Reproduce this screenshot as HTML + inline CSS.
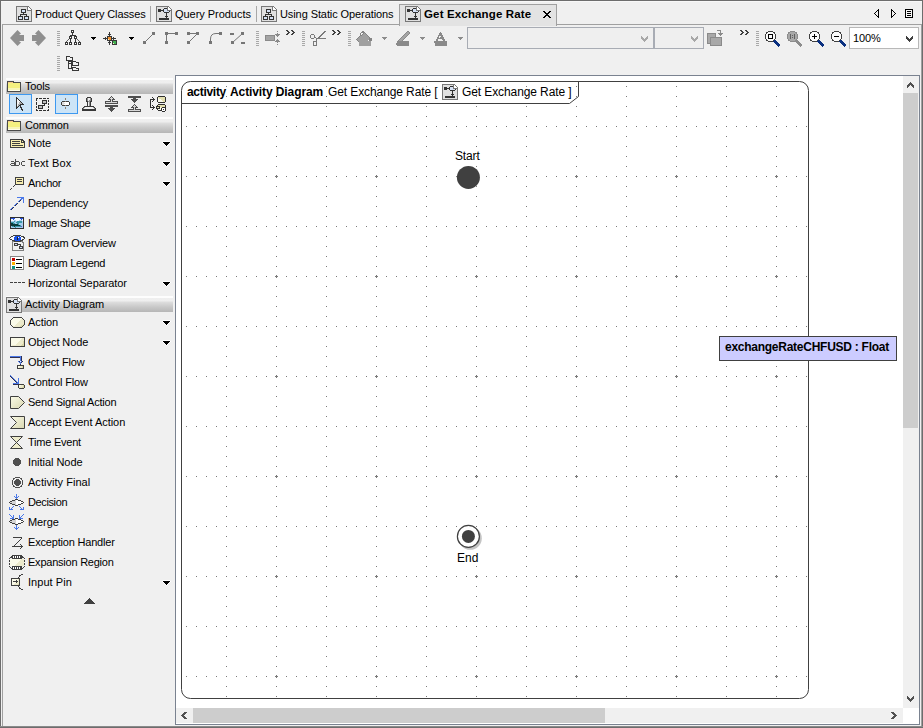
<!DOCTYPE html>
<html><head><meta charset="utf-8">
<style>
*{box-sizing:border-box}
html,body{margin:0;padding:0}
body{width:923px;height:728px;overflow:hidden;position:relative;background:#f0f0f0;font-family:"Liberation Sans",sans-serif;font-size:11px;color:#000}
.a{position:absolute}
.t{position:absolute;white-space:nowrap;line-height:13px}
svg{position:absolute;overflow:visible}
</style></head><body>
<!-- window borders -->
<div class="a" style="left:0;top:0;width:923px;height:1px;background:#6d6d6d"></div>
<div class="a" style="left:0;top:0;width:1px;height:728px;background:#6d6d6d"></div>
<div class="a" style="left:922px;top:0;width:1px;height:728px;background:#6d6d6d"></div>
<div class="a" style="left:0;top:726px;width:923px;height:1px;background:#8a8a8a"></div><div class="a" style="left:0;top:727px;width:923px;height:1px;background:#6d6d6d"></div>
<div class="a" style="left:1px;top:1px;width:921px;height:1px;background:#f8f8f8"></div>
<!-- content pane border -->
<div class="a" style="left:2px;top:24px;width:920px;height:1px;background:#a0a0a0"></div>
<div class="a" style="left:2px;top:24px;width:1px;height:702px;background:#a0a0a0"></div>
<div class="a" style="left:921px;top:24px;width:1px;height:702px;background:#a0a0a0"></div>
<!-- TABS -->
<svg width="16" height="16" style="left:16px;top:6px" shape-rendering="crispEdges"><rect x="0" y="0" width="13" height="1" fill="#787878"/><rect x="0" y="1" width="1" height="1" fill="#787878"/><rect x="1" y="1" width="10" height="1" fill="#e0e0e0"/><rect x="11" y="1" width="1" height="1" fill="#787878"/><rect x="12" y="1" width="1" height="1" fill="#ffffff"/><rect x="13" y="1" width="1" height="1" fill="#787878"/><rect x="0" y="2" width="1" height="1" fill="#787878"/><rect x="1" y="2" width="10" height="1" fill="#e0e0e0"/><rect x="11" y="2" width="1" height="1" fill="#787878"/><rect x="12" y="2" width="2" height="1" fill="#ffffff"/><rect x="14" y="2" width="1" height="1" fill="#787878"/><rect x="0" y="3" width="1" height="1" fill="#787878"/><rect x="1" y="3" width="4" height="1" fill="#e0e0e0"/><rect x="5" y="3" width="5" height="1" fill="#333333"/><rect x="10" y="3" width="1" height="1" fill="#e0e0e0"/><rect x="11" y="3" width="1" height="1" fill="#787878"/><rect x="12" y="3" width="3" height="1" fill="#ffffff"/><rect x="15" y="3" width="1" height="1" fill="#787878"/><rect x="0" y="4" width="1" height="1" fill="#787878"/><rect x="1" y="4" width="4" height="1" fill="#e0e0e0"/><rect x="5" y="4" width="1" height="1" fill="#333333"/><rect x="6" y="4" width="3" height="1" fill="#d4e0f4"/><rect x="9" y="4" width="1" height="1" fill="#333333"/><rect x="10" y="4" width="1" height="1" fill="#e0e0e0"/><rect x="11" y="4" width="5" height="1" fill="#787878"/><rect x="0" y="5" width="1" height="1" fill="#787878"/><rect x="1" y="5" width="4" height="1" fill="#e0e0e0"/><rect x="5" y="5" width="1" height="1" fill="#333333"/><rect x="6" y="5" width="3" height="1" fill="#d4e0f4"/><rect x="9" y="5" width="1" height="1" fill="#333333"/><rect x="10" y="5" width="5" height="1" fill="#e0e0e0"/><rect x="15" y="5" width="1" height="1" fill="#787878"/><rect x="0" y="6" width="1" height="1" fill="#787878"/><rect x="1" y="6" width="4" height="1" fill="#e0e0e0"/><rect x="5" y="6" width="5" height="1" fill="#333333"/><rect x="10" y="6" width="5" height="1" fill="#e0e0e0"/><rect x="15" y="6" width="1" height="1" fill="#787878"/><rect x="0" y="7" width="1" height="1" fill="#787878"/><rect x="1" y="7" width="6" height="1" fill="#e0e0e0"/><rect x="7" y="7" width="1" height="1" fill="#333333"/><rect x="8" y="7" width="7" height="1" fill="#e0e0e0"/><rect x="15" y="7" width="1" height="1" fill="#787878"/><rect x="0" y="8" width="1" height="1" fill="#787878"/><rect x="1" y="8" width="3" height="1" fill="#e0e0e0"/><rect x="4" y="8" width="7" height="1" fill="#333333"/><rect x="11" y="8" width="4" height="1" fill="#e0e0e0"/><rect x="15" y="8" width="1" height="1" fill="#787878"/><rect x="0" y="9" width="1" height="1" fill="#787878"/><rect x="1" y="9" width="3" height="1" fill="#e0e0e0"/><rect x="4" y="9" width="1" height="1" fill="#333333"/><rect x="5" y="9" width="5" height="1" fill="#e0e0e0"/><rect x="10" y="9" width="1" height="1" fill="#333333"/><rect x="11" y="9" width="4" height="1" fill="#e0e0e0"/><rect x="15" y="9" width="1" height="1" fill="#787878"/><rect x="0" y="10" width="1" height="1" fill="#787878"/><rect x="1" y="10" width="1" height="1" fill="#e0e0e0"/><rect x="2" y="10" width="5" height="1" fill="#333333"/><rect x="7" y="10" width="1" height="1" fill="#e0e0e0"/><rect x="8" y="10" width="5" height="1" fill="#333333"/><rect x="13" y="10" width="2" height="1" fill="#e0e0e0"/><rect x="15" y="10" width="1" height="1" fill="#787878"/><rect x="0" y="11" width="1" height="1" fill="#787878"/><rect x="1" y="11" width="1" height="1" fill="#e0e0e0"/><rect x="2" y="11" width="1" height="1" fill="#333333"/><rect x="3" y="11" width="3" height="1" fill="#d4e0f4"/><rect x="6" y="11" width="1" height="1" fill="#333333"/><rect x="7" y="11" width="1" height="1" fill="#e0e0e0"/><rect x="8" y="11" width="1" height="1" fill="#333333"/><rect x="9" y="11" width="3" height="1" fill="#d4e0f4"/><rect x="12" y="11" width="1" height="1" fill="#333333"/><rect x="13" y="11" width="2" height="1" fill="#e0e0e0"/><rect x="15" y="11" width="1" height="1" fill="#787878"/><rect x="0" y="12" width="1" height="1" fill="#787878"/><rect x="1" y="12" width="1" height="1" fill="#e0e0e0"/><rect x="2" y="12" width="1" height="1" fill="#333333"/><rect x="3" y="12" width="3" height="1" fill="#d4e0f4"/><rect x="6" y="12" width="1" height="1" fill="#333333"/><rect x="7" y="12" width="1" height="1" fill="#e0e0e0"/><rect x="8" y="12" width="1" height="1" fill="#333333"/><rect x="9" y="12" width="3" height="1" fill="#d4e0f4"/><rect x="12" y="12" width="1" height="1" fill="#333333"/><rect x="13" y="12" width="2" height="1" fill="#e0e0e0"/><rect x="15" y="12" width="1" height="1" fill="#787878"/><rect x="0" y="13" width="1" height="1" fill="#787878"/><rect x="1" y="13" width="1" height="1" fill="#e0e0e0"/><rect x="2" y="13" width="5" height="1" fill="#333333"/><rect x="7" y="13" width="1" height="1" fill="#e0e0e0"/><rect x="8" y="13" width="5" height="1" fill="#333333"/><rect x="13" y="13" width="2" height="1" fill="#e0e0e0"/><rect x="15" y="13" width="1" height="1" fill="#787878"/><rect x="0" y="14" width="1" height="1" fill="#787878"/><rect x="1" y="14" width="14" height="1" fill="#e0e0e0"/><rect x="15" y="14" width="1" height="1" fill="#787878"/><rect x="0" y="15" width="16" height="1" fill="#787878"/></svg>
<div class="t" style="left:35px;top:8px;letter-spacing:-0.12px">Product Query Classes</div>
<div class="a" style="left:150px;top:6px;width:1px;height:16px;background:#a8a8a8"></div>
<svg width="16" height="16" style="left:156px;top:6px" shape-rendering="crispEdges"><rect x="0" y="0" width="13" height="1" fill="#787878"/><rect x="0" y="1" width="1" height="1" fill="#787878"/><rect x="1" y="1" width="10" height="1" fill="#e0e0e0"/><rect x="11" y="1" width="1" height="1" fill="#787878"/><rect x="12" y="1" width="1" height="1" fill="#ffffff"/><rect x="13" y="1" width="1" height="1" fill="#787878"/><rect x="0" y="2" width="1" height="1" fill="#787878"/><rect x="1" y="2" width="7" height="1" fill="#e0e0e0"/><rect x="8" y="2" width="3" height="1" fill="#333333"/><rect x="11" y="2" width="1" height="1" fill="#787878"/><rect x="12" y="2" width="2" height="1" fill="#ffffff"/><rect x="14" y="2" width="1" height="1" fill="#787878"/><rect x="0" y="3" width="1" height="1" fill="#787878"/><rect x="1" y="3" width="1" height="1" fill="#e0e0e0"/><rect x="2" y="3" width="3" height="1" fill="#333333"/><rect x="5" y="3" width="2" height="1" fill="#e0e0e0"/><rect x="7" y="3" width="1" height="1" fill="#333333"/><rect x="8" y="3" width="3" height="1" fill="#d4e0f4"/><rect x="11" y="3" width="1" height="1" fill="#787878"/><rect x="12" y="3" width="3" height="1" fill="#ffffff"/><rect x="15" y="3" width="1" height="1" fill="#787878"/><rect x="0" y="4" width="1" height="1" fill="#787878"/><rect x="1" y="4" width="1" height="1" fill="#e0e0e0"/><rect x="2" y="4" width="6" height="1" fill="#333333"/><rect x="8" y="4" width="3" height="1" fill="#d4e0f4"/><rect x="11" y="4" width="5" height="1" fill="#787878"/><rect x="0" y="5" width="1" height="1" fill="#787878"/><rect x="1" y="5" width="1" height="1" fill="#e0e0e0"/><rect x="2" y="5" width="3" height="1" fill="#333333"/><rect x="5" y="5" width="2" height="1" fill="#e0e0e0"/><rect x="7" y="5" width="1" height="1" fill="#333333"/><rect x="8" y="5" width="5" height="1" fill="#d4e0f4"/><rect x="13" y="5" width="1" height="1" fill="#333333"/><rect x="14" y="5" width="1" height="1" fill="#e0e0e0"/><rect x="15" y="5" width="1" height="1" fill="#787878"/><rect x="0" y="6" width="1" height="1" fill="#787878"/><rect x="1" y="6" width="7" height="1" fill="#e0e0e0"/><rect x="8" y="6" width="5" height="1" fill="#333333"/><rect x="13" y="6" width="2" height="1" fill="#e0e0e0"/><rect x="15" y="6" width="1" height="1" fill="#787878"/><rect x="0" y="7" width="1" height="1" fill="#787878"/><rect x="1" y="7" width="9" height="1" fill="#e0e0e0"/><rect x="10" y="7" width="1" height="1" fill="#333333"/><rect x="11" y="7" width="4" height="1" fill="#e0e0e0"/><rect x="15" y="7" width="1" height="1" fill="#787878"/><rect x="0" y="8" width="1" height="1" fill="#787878"/><rect x="1" y="8" width="9" height="1" fill="#e0e0e0"/><rect x="10" y="8" width="1" height="1" fill="#333333"/><rect x="11" y="8" width="4" height="1" fill="#e0e0e0"/><rect x="15" y="8" width="1" height="1" fill="#787878"/><rect x="0" y="9" width="1" height="1" fill="#787878"/><rect x="1" y="9" width="9" height="1" fill="#e0e0e0"/><rect x="10" y="9" width="1" height="1" fill="#333333"/><rect x="11" y="9" width="4" height="1" fill="#e0e0e0"/><rect x="15" y="9" width="1" height="1" fill="#787878"/><rect x="0" y="10" width="1" height="1" fill="#787878"/><rect x="1" y="10" width="8" height="1" fill="#e0e0e0"/><rect x="9" y="10" width="3" height="1" fill="#333333"/><rect x="12" y="10" width="3" height="1" fill="#e0e0e0"/><rect x="15" y="10" width="1" height="1" fill="#787878"/><rect x="0" y="11" width="1" height="1" fill="#787878"/><rect x="1" y="11" width="9" height="1" fill="#e0e0e0"/><rect x="10" y="11" width="1" height="1" fill="#333333"/><rect x="11" y="11" width="4" height="1" fill="#e0e0e0"/><rect x="15" y="11" width="1" height="1" fill="#787878"/><rect x="0" y="12" width="1" height="1" fill="#787878"/><rect x="1" y="12" width="2" height="1" fill="#e0e0e0"/><rect x="3" y="12" width="10" height="1" fill="#333333"/><rect x="13" y="12" width="2" height="1" fill="#e0e0e0"/><rect x="15" y="12" width="1" height="1" fill="#787878"/><rect x="0" y="13" width="1" height="1" fill="#787878"/><rect x="1" y="13" width="2" height="1" fill="#e0e0e0"/><rect x="3" y="13" width="10" height="1" fill="#333333"/><rect x="13" y="13" width="2" height="1" fill="#e0e0e0"/><rect x="15" y="13" width="1" height="1" fill="#787878"/><rect x="0" y="14" width="1" height="1" fill="#787878"/><rect x="1" y="14" width="14" height="1" fill="#e0e0e0"/><rect x="15" y="14" width="1" height="1" fill="#787878"/><rect x="0" y="15" width="16" height="1" fill="#787878"/></svg>
<div class="t" style="left:175px;top:8px;letter-spacing:-0.04px">Query Products</div>
<div class="a" style="left:256px;top:6px;width:1px;height:16px;background:#a8a8a8"></div>
<svg width="16" height="16" style="left:261px;top:6px" shape-rendering="crispEdges"><rect x="0" y="0" width="13" height="1" fill="#787878"/><rect x="0" y="1" width="1" height="1" fill="#787878"/><rect x="1" y="1" width="10" height="1" fill="#e0e0e0"/><rect x="11" y="1" width="1" height="1" fill="#787878"/><rect x="12" y="1" width="1" height="1" fill="#ffffff"/><rect x="13" y="1" width="1" height="1" fill="#787878"/><rect x="0" y="2" width="1" height="1" fill="#787878"/><rect x="1" y="2" width="10" height="1" fill="#e0e0e0"/><rect x="11" y="2" width="1" height="1" fill="#787878"/><rect x="12" y="2" width="2" height="1" fill="#ffffff"/><rect x="14" y="2" width="1" height="1" fill="#787878"/><rect x="0" y="3" width="1" height="1" fill="#787878"/><rect x="1" y="3" width="4" height="1" fill="#e0e0e0"/><rect x="5" y="3" width="5" height="1" fill="#333333"/><rect x="10" y="3" width="1" height="1" fill="#e0e0e0"/><rect x="11" y="3" width="1" height="1" fill="#787878"/><rect x="12" y="3" width="3" height="1" fill="#ffffff"/><rect x="15" y="3" width="1" height="1" fill="#787878"/><rect x="0" y="4" width="1" height="1" fill="#787878"/><rect x="1" y="4" width="4" height="1" fill="#e0e0e0"/><rect x="5" y="4" width="1" height="1" fill="#333333"/><rect x="6" y="4" width="3" height="1" fill="#d4e0f4"/><rect x="9" y="4" width="1" height="1" fill="#333333"/><rect x="10" y="4" width="1" height="1" fill="#e0e0e0"/><rect x="11" y="4" width="5" height="1" fill="#787878"/><rect x="0" y="5" width="1" height="1" fill="#787878"/><rect x="1" y="5" width="4" height="1" fill="#e0e0e0"/><rect x="5" y="5" width="1" height="1" fill="#333333"/><rect x="6" y="5" width="3" height="1" fill="#d4e0f4"/><rect x="9" y="5" width="1" height="1" fill="#333333"/><rect x="10" y="5" width="5" height="1" fill="#e0e0e0"/><rect x="15" y="5" width="1" height="1" fill="#787878"/><rect x="0" y="6" width="1" height="1" fill="#787878"/><rect x="1" y="6" width="4" height="1" fill="#e0e0e0"/><rect x="5" y="6" width="5" height="1" fill="#333333"/><rect x="10" y="6" width="5" height="1" fill="#e0e0e0"/><rect x="15" y="6" width="1" height="1" fill="#787878"/><rect x="0" y="7" width="1" height="1" fill="#787878"/><rect x="1" y="7" width="6" height="1" fill="#e0e0e0"/><rect x="7" y="7" width="1" height="1" fill="#333333"/><rect x="8" y="7" width="7" height="1" fill="#e0e0e0"/><rect x="15" y="7" width="1" height="1" fill="#787878"/><rect x="0" y="8" width="1" height="1" fill="#787878"/><rect x="1" y="8" width="3" height="1" fill="#e0e0e0"/><rect x="4" y="8" width="7" height="1" fill="#333333"/><rect x="11" y="8" width="4" height="1" fill="#e0e0e0"/><rect x="15" y="8" width="1" height="1" fill="#787878"/><rect x="0" y="9" width="1" height="1" fill="#787878"/><rect x="1" y="9" width="3" height="1" fill="#e0e0e0"/><rect x="4" y="9" width="1" height="1" fill="#333333"/><rect x="5" y="9" width="5" height="1" fill="#e0e0e0"/><rect x="10" y="9" width="1" height="1" fill="#333333"/><rect x="11" y="9" width="4" height="1" fill="#e0e0e0"/><rect x="15" y="9" width="1" height="1" fill="#787878"/><rect x="0" y="10" width="1" height="1" fill="#787878"/><rect x="1" y="10" width="1" height="1" fill="#e0e0e0"/><rect x="2" y="10" width="5" height="1" fill="#333333"/><rect x="7" y="10" width="1" height="1" fill="#e0e0e0"/><rect x="8" y="10" width="5" height="1" fill="#333333"/><rect x="13" y="10" width="2" height="1" fill="#e0e0e0"/><rect x="15" y="10" width="1" height="1" fill="#787878"/><rect x="0" y="11" width="1" height="1" fill="#787878"/><rect x="1" y="11" width="1" height="1" fill="#e0e0e0"/><rect x="2" y="11" width="1" height="1" fill="#333333"/><rect x="3" y="11" width="3" height="1" fill="#d4e0f4"/><rect x="6" y="11" width="1" height="1" fill="#333333"/><rect x="7" y="11" width="1" height="1" fill="#e0e0e0"/><rect x="8" y="11" width="1" height="1" fill="#333333"/><rect x="9" y="11" width="3" height="1" fill="#d4e0f4"/><rect x="12" y="11" width="1" height="1" fill="#333333"/><rect x="13" y="11" width="2" height="1" fill="#e0e0e0"/><rect x="15" y="11" width="1" height="1" fill="#787878"/><rect x="0" y="12" width="1" height="1" fill="#787878"/><rect x="1" y="12" width="1" height="1" fill="#e0e0e0"/><rect x="2" y="12" width="1" height="1" fill="#333333"/><rect x="3" y="12" width="3" height="1" fill="#d4e0f4"/><rect x="6" y="12" width="1" height="1" fill="#333333"/><rect x="7" y="12" width="1" height="1" fill="#e0e0e0"/><rect x="8" y="12" width="1" height="1" fill="#333333"/><rect x="9" y="12" width="3" height="1" fill="#d4e0f4"/><rect x="12" y="12" width="1" height="1" fill="#333333"/><rect x="13" y="12" width="2" height="1" fill="#e0e0e0"/><rect x="15" y="12" width="1" height="1" fill="#787878"/><rect x="0" y="13" width="1" height="1" fill="#787878"/><rect x="1" y="13" width="1" height="1" fill="#e0e0e0"/><rect x="2" y="13" width="5" height="1" fill="#333333"/><rect x="7" y="13" width="1" height="1" fill="#e0e0e0"/><rect x="8" y="13" width="5" height="1" fill="#333333"/><rect x="13" y="13" width="2" height="1" fill="#e0e0e0"/><rect x="15" y="13" width="1" height="1" fill="#787878"/><rect x="0" y="14" width="1" height="1" fill="#787878"/><rect x="1" y="14" width="14" height="1" fill="#e0e0e0"/><rect x="15" y="14" width="1" height="1" fill="#787878"/><rect x="0" y="15" width="16" height="1" fill="#787878"/></svg>
<div class="t" style="left:280px;top:8px;letter-spacing:-0.09px">Using Static Operations</div>
<!-- active tab -->
<div class="a" style="left:399px;top:4px;width:158px;height:22px;background:#e3e3e3;border:1px solid #a0a0a0;border-bottom:none"></div>
<svg width="16" height="16" style="left:405px;top:6px" shape-rendering="crispEdges"><rect x="0" y="0" width="13" height="1" fill="#787878"/><rect x="0" y="1" width="1" height="1" fill="#787878"/><rect x="1" y="1" width="10" height="1" fill="#e0e0e0"/><rect x="11" y="1" width="1" height="1" fill="#787878"/><rect x="12" y="1" width="1" height="1" fill="#ffffff"/><rect x="13" y="1" width="1" height="1" fill="#787878"/><rect x="0" y="2" width="1" height="1" fill="#787878"/><rect x="1" y="2" width="7" height="1" fill="#e0e0e0"/><rect x="8" y="2" width="3" height="1" fill="#333333"/><rect x="11" y="2" width="1" height="1" fill="#787878"/><rect x="12" y="2" width="2" height="1" fill="#ffffff"/><rect x="14" y="2" width="1" height="1" fill="#787878"/><rect x="0" y="3" width="1" height="1" fill="#787878"/><rect x="1" y="3" width="1" height="1" fill="#e0e0e0"/><rect x="2" y="3" width="3" height="1" fill="#333333"/><rect x="5" y="3" width="2" height="1" fill="#e0e0e0"/><rect x="7" y="3" width="1" height="1" fill="#333333"/><rect x="8" y="3" width="3" height="1" fill="#d4e0f4"/><rect x="11" y="3" width="1" height="1" fill="#787878"/><rect x="12" y="3" width="3" height="1" fill="#ffffff"/><rect x="15" y="3" width="1" height="1" fill="#787878"/><rect x="0" y="4" width="1" height="1" fill="#787878"/><rect x="1" y="4" width="1" height="1" fill="#e0e0e0"/><rect x="2" y="4" width="6" height="1" fill="#333333"/><rect x="8" y="4" width="3" height="1" fill="#d4e0f4"/><rect x="11" y="4" width="5" height="1" fill="#787878"/><rect x="0" y="5" width="1" height="1" fill="#787878"/><rect x="1" y="5" width="1" height="1" fill="#e0e0e0"/><rect x="2" y="5" width="3" height="1" fill="#333333"/><rect x="5" y="5" width="2" height="1" fill="#e0e0e0"/><rect x="7" y="5" width="1" height="1" fill="#333333"/><rect x="8" y="5" width="5" height="1" fill="#d4e0f4"/><rect x="13" y="5" width="1" height="1" fill="#333333"/><rect x="14" y="5" width="1" height="1" fill="#e0e0e0"/><rect x="15" y="5" width="1" height="1" fill="#787878"/><rect x="0" y="6" width="1" height="1" fill="#787878"/><rect x="1" y="6" width="7" height="1" fill="#e0e0e0"/><rect x="8" y="6" width="5" height="1" fill="#333333"/><rect x="13" y="6" width="2" height="1" fill="#e0e0e0"/><rect x="15" y="6" width="1" height="1" fill="#787878"/><rect x="0" y="7" width="1" height="1" fill="#787878"/><rect x="1" y="7" width="9" height="1" fill="#e0e0e0"/><rect x="10" y="7" width="1" height="1" fill="#333333"/><rect x="11" y="7" width="4" height="1" fill="#e0e0e0"/><rect x="15" y="7" width="1" height="1" fill="#787878"/><rect x="0" y="8" width="1" height="1" fill="#787878"/><rect x="1" y="8" width="9" height="1" fill="#e0e0e0"/><rect x="10" y="8" width="1" height="1" fill="#333333"/><rect x="11" y="8" width="4" height="1" fill="#e0e0e0"/><rect x="15" y="8" width="1" height="1" fill="#787878"/><rect x="0" y="9" width="1" height="1" fill="#787878"/><rect x="1" y="9" width="9" height="1" fill="#e0e0e0"/><rect x="10" y="9" width="1" height="1" fill="#333333"/><rect x="11" y="9" width="4" height="1" fill="#e0e0e0"/><rect x="15" y="9" width="1" height="1" fill="#787878"/><rect x="0" y="10" width="1" height="1" fill="#787878"/><rect x="1" y="10" width="8" height="1" fill="#e0e0e0"/><rect x="9" y="10" width="3" height="1" fill="#333333"/><rect x="12" y="10" width="3" height="1" fill="#e0e0e0"/><rect x="15" y="10" width="1" height="1" fill="#787878"/><rect x="0" y="11" width="1" height="1" fill="#787878"/><rect x="1" y="11" width="9" height="1" fill="#e0e0e0"/><rect x="10" y="11" width="1" height="1" fill="#333333"/><rect x="11" y="11" width="4" height="1" fill="#e0e0e0"/><rect x="15" y="11" width="1" height="1" fill="#787878"/><rect x="0" y="12" width="1" height="1" fill="#787878"/><rect x="1" y="12" width="2" height="1" fill="#e0e0e0"/><rect x="3" y="12" width="10" height="1" fill="#333333"/><rect x="13" y="12" width="2" height="1" fill="#e0e0e0"/><rect x="15" y="12" width="1" height="1" fill="#787878"/><rect x="0" y="13" width="1" height="1" fill="#787878"/><rect x="1" y="13" width="2" height="1" fill="#e0e0e0"/><rect x="3" y="13" width="10" height="1" fill="#333333"/><rect x="13" y="13" width="2" height="1" fill="#e0e0e0"/><rect x="15" y="13" width="1" height="1" fill="#787878"/><rect x="0" y="14" width="1" height="1" fill="#787878"/><rect x="1" y="14" width="14" height="1" fill="#e0e0e0"/><rect x="15" y="14" width="1" height="1" fill="#787878"/><rect x="0" y="15" width="16" height="1" fill="#787878"/></svg>
<div class="t" style="left:424px;top:8px;font-weight:bold;font-size:11.5px;letter-spacing:0.15px">Get Exchange Rate</div>
<svg width="8" height="7" style="left:543px;top:11px" shape-rendering="crispEdges"><rect x="0" y="0" width="2" height="1" fill="#000"/><rect x="6" y="0" width="2" height="1" fill="#000"/><rect x="1" y="1" width="2" height="1" fill="#000"/><rect x="5" y="1" width="2" height="1" fill="#000"/><rect x="2" y="2" width="4" height="1" fill="#000"/><rect x="3" y="3" width="2" height="1" fill="#000"/><rect x="2" y="4" width="4" height="1" fill="#000"/><rect x="1" y="5" width="2" height="1" fill="#000"/><rect x="5" y="5" width="2" height="1" fill="#000"/><rect x="0" y="6" width="2" height="1" fill="#000"/><rect x="6" y="6" width="2" height="1" fill="#000"/></svg>
<!-- tab nav -->
<svg width="5" height="9" style="left:874px;top:9px" shape-rendering="crispEdges"><rect x="4" y="0" width="1" height="1" fill="#000"/><rect x="3" y="1" width="2" height="1" fill="#000"/><rect x="2" y="2" width="1" height="1" fill="#000"/><rect x="4" y="2" width="1" height="1" fill="#000"/><rect x="1" y="3" width="1" height="1" fill="#000"/><rect x="4" y="3" width="1" height="1" fill="#000"/><rect x="0" y="4" width="1" height="1" fill="#000"/><rect x="4" y="4" width="1" height="1" fill="#000"/><rect x="1" y="5" width="1" height="1" fill="#000"/><rect x="4" y="5" width="1" height="1" fill="#000"/><rect x="2" y="6" width="1" height="1" fill="#000"/><rect x="4" y="6" width="1" height="1" fill="#000"/><rect x="3" y="7" width="2" height="1" fill="#000"/><rect x="4" y="8" width="1" height="1" fill="#000"/></svg>
<svg width="5" height="9" style="left:891px;top:9px" shape-rendering="crispEdges"><rect x="0" y="0" width="1" height="1" fill="#000"/><rect x="0" y="1" width="2" height="1" fill="#000"/><rect x="0" y="2" width="1" height="1" fill="#000"/><rect x="2" y="2" width="1" height="1" fill="#000"/><rect x="0" y="3" width="1" height="1" fill="#000"/><rect x="3" y="3" width="1" height="1" fill="#000"/><rect x="0" y="4" width="1" height="1" fill="#000"/><rect x="4" y="4" width="1" height="1" fill="#000"/><rect x="0" y="5" width="1" height="1" fill="#000"/><rect x="3" y="5" width="1" height="1" fill="#000"/><rect x="0" y="6" width="1" height="1" fill="#000"/><rect x="2" y="6" width="1" height="1" fill="#000"/><rect x="0" y="7" width="2" height="1" fill="#000"/><rect x="0" y="8" width="1" height="1" fill="#000"/></svg>
<svg width="8" height="9" style="left:905px;top:9px" shape-rendering="crispEdges"><rect x="0" y="0" width="8" height="1" fill="#000"/><rect x="0" y="1" width="1" height="1" fill="#000"/><rect x="1" y="1" width="6" height="1" fill="#f8f8f8"/><rect x="7" y="1" width="1" height="1" fill="#000"/><rect x="0" y="2" width="1" height="1" fill="#000"/><rect x="1" y="2" width="1" height="1" fill="#f8f8f8"/><rect x="2" y="2" width="4" height="1" fill="#000"/><rect x="6" y="2" width="1" height="1" fill="#f8f8f8"/><rect x="7" y="2" width="1" height="1" fill="#000"/><rect x="0" y="3" width="1" height="1" fill="#000"/><rect x="1" y="3" width="6" height="1" fill="#f8f8f8"/><rect x="7" y="3" width="1" height="1" fill="#000"/><rect x="0" y="4" width="1" height="1" fill="#000"/><rect x="1" y="4" width="1" height="1" fill="#f8f8f8"/><rect x="2" y="4" width="4" height="1" fill="#000"/><rect x="6" y="4" width="1" height="1" fill="#f8f8f8"/><rect x="7" y="4" width="1" height="1" fill="#000"/><rect x="0" y="5" width="1" height="1" fill="#000"/><rect x="1" y="5" width="6" height="1" fill="#f8f8f8"/><rect x="7" y="5" width="1" height="1" fill="#000"/><rect x="0" y="6" width="1" height="1" fill="#000"/><rect x="1" y="6" width="1" height="1" fill="#f8f8f8"/><rect x="2" y="6" width="4" height="1" fill="#000"/><rect x="6" y="6" width="1" height="1" fill="#f8f8f8"/><rect x="7" y="6" width="1" height="1" fill="#000"/><rect x="0" y="7" width="1" height="1" fill="#000"/><rect x="1" y="7" width="6" height="1" fill="#f8f8f8"/><rect x="7" y="7" width="1" height="1" fill="#000"/><rect x="0" y="8" width="8" height="1" fill="#000"/></svg>

<!-- TOOLBAR -->
<svg width="16" height="17" style="left:9px;top:30px"><path d="M1 8L8.5 0L12 3.5L10 5.1H15V10.9H10L12 12.5L8.5 16Z" fill="#8f8f8f"/></svg>
<svg width="16" height="17" style="left:32px;top:30px"><path d="M14 8L6.5 0L3 3.5L5 5.1H0V10.9H5L3 12.5L6.5 16Z" fill="#8f8f8f"/></svg>
<svg width="4" height="16" style="left:57px;top:31px" shape-rendering="crispEdges"><path d="M0 0.5H3M0 2.5H3M0 4.5H3M0 6.5H3M0 8.5H3M0 10.5H3M0 12.5H3M0 14.5H3" stroke="#a8a8a8"/></svg>
<svg width="16" height="15" style="left:65px;top:30px" shape-rendering="crispEdges"><rect x="6" y="0" width="3" height="1" fill="#383838"/><rect x="6" y="1" width="1" height="1" fill="#383838"/><rect x="7" y="1" width="1" height="1" fill="#ffffff"/><rect x="8" y="1" width="1" height="1" fill="#383838"/><rect x="6" y="2" width="3" height="1" fill="#383838"/><rect x="7" y="3" width="1" height="1" fill="#383838"/><rect x="7" y="4" width="1" height="1" fill="#383838"/><rect x="5" y="5" width="6" height="1" fill="#383838"/><rect x="4" y="6" width="3" height="1" fill="#383838"/><rect x="9" y="6" width="3" height="1" fill="#383838"/><rect x="4" y="7" width="1" height="1" fill="#383838"/><rect x="5" y="7" width="1" height="1" fill="#ffffff"/><rect x="6" y="7" width="1" height="1" fill="#383838"/><rect x="9" y="7" width="1" height="1" fill="#383838"/><rect x="10" y="7" width="1" height="1" fill="#ffffff"/><rect x="11" y="7" width="1" height="1" fill="#383838"/><rect x="4" y="8" width="3" height="1" fill="#383838"/><rect x="9" y="8" width="3" height="1" fill="#383838"/><rect x="3" y="9" width="1" height="1" fill="#606060"/><rect x="5" y="9" width="1" height="1" fill="#383838"/><rect x="10" y="9" width="1" height="1" fill="#383838"/><rect x="12" y="9" width="1" height="1" fill="#606060"/><rect x="2" y="10" width="1" height="1" fill="#606060"/><rect x="5" y="10" width="1" height="1" fill="#383838"/><rect x="10" y="10" width="1" height="1" fill="#383838"/><rect x="13" y="10" width="1" height="1" fill="#606060"/><rect x="1" y="11" width="1" height="1" fill="#606060"/><rect x="5" y="11" width="1" height="1" fill="#383838"/><rect x="10" y="11" width="1" height="1" fill="#383838"/><rect x="14" y="11" width="1" height="1" fill="#606060"/><rect x="0" y="12" width="3" height="1" fill="#383838"/><rect x="4" y="12" width="3" height="1" fill="#383838"/><rect x="9" y="12" width="3" height="1" fill="#383838"/><rect x="13" y="12" width="3" height="1" fill="#383838"/><rect x="0" y="13" width="1" height="1" fill="#383838"/><rect x="1" y="13" width="1" height="1" fill="#ffffff"/><rect x="2" y="13" width="1" height="1" fill="#383838"/><rect x="4" y="13" width="1" height="1" fill="#383838"/><rect x="5" y="13" width="1" height="1" fill="#ffffff"/><rect x="6" y="13" width="1" height="1" fill="#383838"/><rect x="9" y="13" width="1" height="1" fill="#383838"/><rect x="10" y="13" width="1" height="1" fill="#ffffff"/><rect x="11" y="13" width="1" height="1" fill="#383838"/><rect x="13" y="13" width="1" height="1" fill="#383838"/><rect x="14" y="13" width="1" height="1" fill="#ffffff"/><rect x="15" y="13" width="1" height="1" fill="#383838"/><rect x="0" y="14" width="3" height="1" fill="#383838"/><rect x="4" y="14" width="3" height="1" fill="#383838"/><rect x="9" y="14" width="3" height="1" fill="#383838"/><rect x="13" y="14" width="3" height="1" fill="#383838"/></svg>
<svg width="5" height="3" style="left:91px;top:37px" shape-rendering="crispEdges"><rect x="0" y="0" width="5" height="1" fill="#000"/><rect x="1" y="1" width="3" height="1" fill="#000"/><rect x="2" y="2" width="1" height="1" fill="#000"/></svg>
<svg width="14" height="13" style="left:103px;top:32px" shape-rendering="crispEdges"><rect x="6" y="0" width="1" height="1" fill="#383838"/><rect x="6" y="1" width="1" height="1" fill="#383838"/><rect x="5" y="2" width="3" height="1" fill="#383838"/><rect x="6" y="3" width="1" height="1" fill="#383838"/><rect x="4" y="4" width="5" height="1" fill="#383838"/><rect x="2" y="5" width="1" height="1" fill="#383838"/><rect x="4" y="5" width="1" height="1" fill="#383838"/><rect x="5" y="5" width="3" height="1" fill="#ee9030"/><rect x="8" y="5" width="1" height="1" fill="#383838"/><rect x="10" y="5" width="1" height="1" fill="#383838"/><rect x="0" y="6" width="5" height="1" fill="#383838"/><rect x="5" y="6" width="3" height="1" fill="#ee9030"/><rect x="8" y="6" width="5" height="1" fill="#383838"/><rect x="2" y="7" width="1" height="1" fill="#383838"/><rect x="4" y="7" width="1" height="1" fill="#383838"/><rect x="5" y="7" width="1" height="1" fill="#fff0c0"/><rect x="6" y="7" width="2" height="1" fill="#ee9030"/><rect x="8" y="7" width="1" height="1" fill="#383838"/><rect x="10" y="7" width="1" height="1" fill="#383838"/><rect x="4" y="8" width="10" height="1" fill="#383838"/><rect x="6" y="9" width="1" height="1" fill="#383838"/><rect x="9" y="9" width="1" height="1" fill="#383838"/><rect x="10" y="9" width="3" height="1" fill="#40b050"/><rect x="13" y="9" width="1" height="1" fill="#383838"/><rect x="5" y="10" width="3" height="1" fill="#383838"/><rect x="9" y="10" width="1" height="1" fill="#383838"/><rect x="10" y="10" width="3" height="1" fill="#40b050"/><rect x="13" y="10" width="1" height="1" fill="#383838"/><rect x="6" y="11" width="1" height="1" fill="#383838"/><rect x="9" y="11" width="1" height="1" fill="#383838"/><rect x="10" y="11" width="1" height="1" fill="#fff0c0"/><rect x="11" y="11" width="2" height="1" fill="#40b050"/><rect x="13" y="11" width="1" height="1" fill="#383838"/><rect x="6" y="12" width="1" height="1" fill="#383838"/><rect x="9" y="12" width="5" height="1" fill="#383838"/></svg>
<svg width="5" height="3" style="left:129px;top:37px" shape-rendering="crispEdges"><rect x="0" y="0" width="5" height="1" fill="#000"/><rect x="1" y="1" width="3" height="1" fill="#000"/><rect x="2" y="2" width="1" height="1" fill="#000"/></svg>
<svg width="14" height="14" style="left:142px;top:31px" shape-rendering="crispEdges" fill="#767676"><path d="M2.5 11.5L11.5 2.5" stroke="#767676" shape-rendering="auto"/><rect x="1" y="10" width="3" height="3"/><rect x="10" y="1" width="3" height="3"/></svg>
<svg width="14" height="14" style="left:164px;top:31px" shape-rendering="crispEdges" fill="#767676"><path d="M2.5 2.5H11.5M2.5 2.5V11.5" stroke="#767676"/><rect x="1" y="1" width="3" height="3"/><rect x="11" y="1" width="3" height="3"/><rect x="1" y="10" width="3" height="3"/></svg>
<svg width="14" height="14" style="left:186px;top:31px" shape-rendering="crispEdges" fill="#767676"><path d="M2.5 2.5H11.5" stroke="#767676"/><path d="M11.5 2.5L2.5 11.5" stroke="#767676" shape-rendering="auto"/><rect x="1" y="1" width="3" height="3"/><rect x="10" y="1" width="3" height="3"/><rect x="1" y="10" width="3" height="3"/></svg>
<svg width="14" height="14" style="left:208px;top:31px" fill="#767676"><path d="M2.5 11.5V8Q2.5 2.5 8 2.5H11.5" stroke="#767676" fill="none"/><rect x="1" y="10" width="3" height="3"/><rect x="11" y="1" width="3" height="3"/></svg>
<svg width="16" height="14" style="left:230px;top:31px" shape-rendering="crispEdges" fill="#767676"><path d="M12.5 2.5L2.5 11.5" stroke="#767676" shape-rendering="auto"/><rect x="0" y="2" width="4" height="2"/><rect x="11" y="1" width="3" height="3"/><rect x="1" y="10" width="3" height="3"/><rect x="11" y="11" width="4" height="2"/></svg>
<svg width="4" height="16" style="left:256px;top:31px" shape-rendering="crispEdges"><path d="M0 0.5H3M0 2.5H3M0 4.5H3M0 6.5H3M0 8.5H3M0 10.5H3M0 12.5H3M0 14.5H3" stroke="#a8a8a8"/></svg>
<svg width="16" height="14" style="left:265px;top:31px" shape-rendering="crispEdges"><rect x="12" y="0" width="1" height="1" fill="#8a8a8a"/><rect x="12" y="2" width="1" height="1" fill="#8a8a8a"/><rect x="10" y="3" width="5" height="1" fill="#8a8a8a"/><rect x="0" y="4" width="10" height="1" fill="#8a8a8a"/><rect x="11" y="4" width="3" height="1" fill="#8a8a8a"/><rect x="0" y="5" width="1" height="1" fill="#8a8a8a"/><rect x="1" y="5" width="8" height="1" fill="#a4a4a4"/><rect x="9" y="5" width="1" height="1" fill="#8a8a8a"/><rect x="12" y="5" width="1" height="1" fill="#8a8a8a"/><rect x="0" y="6" width="1" height="1" fill="#8a8a8a"/><rect x="1" y="6" width="8" height="1" fill="#a4a4a4"/><rect x="9" y="6" width="1" height="1" fill="#8a8a8a"/><rect x="0" y="7" width="1" height="1" fill="#8a8a8a"/><rect x="1" y="7" width="8" height="1" fill="#a4a4a4"/><rect x="9" y="7" width="1" height="1" fill="#8a8a8a"/><rect x="0" y="8" width="1" height="1" fill="#8a8a8a"/><rect x="1" y="8" width="8" height="1" fill="#a4a4a4"/><rect x="9" y="8" width="1" height="1" fill="#8a8a8a"/><rect x="12" y="8" width="1" height="1" fill="#8a8a8a"/><rect x="0" y="9" width="10" height="1" fill="#8a8a8a"/><rect x="11" y="9" width="3" height="1" fill="#8a8a8a"/><rect x="10" y="10" width="5" height="1" fill="#8a8a8a"/><rect x="12" y="11" width="1" height="1" fill="#8a8a8a"/><rect x="12" y="13" width="1" height="1" fill="#8a8a8a"/></svg>
<svg width="9" height="5" style="left:286px;top:30px" shape-rendering="crispEdges"><rect x="0" y="0" width="2" height="1" fill="#404040"/><rect x="5" y="0" width="2" height="1" fill="#404040"/><rect x="1" y="1" width="2" height="1" fill="#404040"/><rect x="6" y="1" width="2" height="1" fill="#404040"/><rect x="2" y="2" width="2" height="1" fill="#404040"/><rect x="7" y="2" width="2" height="1" fill="#404040"/><rect x="1" y="3" width="2" height="1" fill="#404040"/><rect x="6" y="3" width="2" height="1" fill="#404040"/><rect x="0" y="4" width="2" height="1" fill="#404040"/><rect x="5" y="4" width="2" height="1" fill="#404040"/></svg>
<svg width="4" height="16" style="left:302px;top:31px" shape-rendering="crispEdges"><path d="M0 0.5H3M0 2.5H3M0 4.5H3M0 6.5H3M0 8.5H3M0 10.5H3M0 12.5H3M0 14.5H3" stroke="#a8a8a8"/></svg>
<svg width="16" height="15" style="left:310px;top:31px" shape-rendering="crispEdges"><rect x="14" y="0" width="2" height="1" fill="#7a7a7a"/><rect x="13" y="1" width="2" height="1" fill="#7a7a7a"/><rect x="12" y="2" width="2" height="1" fill="#7a7a7a"/><rect x="1" y="3" width="3" height="1" fill="#7a7a7a"/><rect x="11" y="3" width="2" height="1" fill="#7a7a7a"/><rect x="0" y="4" width="1" height="1" fill="#7a7a7a"/><rect x="4" y="4" width="1" height="1" fill="#7a7a7a"/><rect x="10" y="4" width="2" height="1" fill="#7a7a7a"/><rect x="0" y="5" width="1" height="1" fill="#7a7a7a"/><rect x="4" y="5" width="1" height="1" fill="#7a7a7a"/><rect x="9" y="5" width="2" height="1" fill="#7a7a7a"/><rect x="0" y="6" width="1" height="1" fill="#7a7a7a"/><rect x="4" y="6" width="2" height="1" fill="#7a7a7a"/><rect x="8" y="6" width="2" height="1" fill="#7a7a7a"/><rect x="1" y="7" width="3" height="1" fill="#7a7a7a"/><rect x="6" y="7" width="10" height="1" fill="#7a7a7a"/><rect x="6" y="8" width="1" height="1" fill="#7a7a7a"/><rect x="6" y="9" width="1" height="1" fill="#7a7a7a"/><rect x="3" y="10" width="4" height="1" fill="#7a7a7a"/><rect x="3" y="11" width="1" height="1" fill="#7a7a7a"/><rect x="6" y="11" width="1" height="1" fill="#7a7a7a"/><rect x="3" y="12" width="1" height="1" fill="#7a7a7a"/><rect x="6" y="12" width="1" height="1" fill="#7a7a7a"/><rect x="3" y="13" width="1" height="1" fill="#7a7a7a"/><rect x="6" y="13" width="1" height="1" fill="#7a7a7a"/><rect x="3" y="14" width="4" height="1" fill="#7a7a7a"/></svg>
<svg width="9" height="5" style="left:332px;top:30px" shape-rendering="crispEdges"><rect x="0" y="0" width="2" height="1" fill="#404040"/><rect x="5" y="0" width="2" height="1" fill="#404040"/><rect x="1" y="1" width="2" height="1" fill="#404040"/><rect x="6" y="1" width="2" height="1" fill="#404040"/><rect x="2" y="2" width="2" height="1" fill="#404040"/><rect x="7" y="2" width="2" height="1" fill="#404040"/><rect x="1" y="3" width="2" height="1" fill="#404040"/><rect x="6" y="3" width="2" height="1" fill="#404040"/><rect x="0" y="4" width="2" height="1" fill="#404040"/><rect x="5" y="4" width="2" height="1" fill="#404040"/></svg>
<svg width="4" height="16" style="left:348px;top:31px" shape-rendering="crispEdges"><path d="M0 0.5H3M0 2.5H3M0 4.5H3M0 6.5H3M0 8.5H3M0 10.5H3M0 12.5H3M0 14.5H3" stroke="#a8a8a8"/></svg>
<svg width="16" height="15" style="left:356px;top:31px" shape-rendering="crispEdges"><rect x="6" y="0" width="2" height="1" fill="#858585"/><rect x="5" y="1" width="4" height="1" fill="#858585"/><rect x="4" y="2" width="1" height="1" fill="#858585"/><rect x="5" y="2" width="2" height="1" fill="#f4f4f4"/><rect x="7" y="2" width="1" height="1" fill="#858585"/><rect x="8" y="2" width="1" height="1" fill="#a0a0a0"/><rect x="9" y="2" width="1" height="1" fill="#858585"/><rect x="4" y="3" width="1" height="1" fill="#858585"/><rect x="5" y="3" width="1" height="1" fill="#f4f4f4"/><rect x="6" y="3" width="1" height="1" fill="#858585"/><rect x="7" y="3" width="3" height="1" fill="#a0a0a0"/><rect x="10" y="3" width="1" height="1" fill="#858585"/><rect x="4" y="4" width="2" height="1" fill="#858585"/><rect x="6" y="4" width="5" height="1" fill="#a0a0a0"/><rect x="11" y="4" width="1" height="1" fill="#858585"/><rect x="3" y="5" width="1" height="1" fill="#858585"/><rect x="4" y="5" width="8" height="1" fill="#a0a0a0"/><rect x="12" y="5" width="1" height="1" fill="#858585"/><rect x="2" y="6" width="1" height="1" fill="#858585"/><rect x="3" y="6" width="10" height="1" fill="#a0a0a0"/><rect x="13" y="6" width="1" height="1" fill="#858585"/><rect x="1" y="7" width="1" height="1" fill="#858585"/><rect x="2" y="7" width="11" height="1" fill="#a0a0a0"/><rect x="13" y="7" width="3" height="1" fill="#858585"/><rect x="0" y="8" width="1" height="1" fill="#858585"/><rect x="1" y="8" width="12" height="1" fill="#a0a0a0"/><rect x="13" y="8" width="3" height="1" fill="#858585"/><rect x="1" y="9" width="1" height="1" fill="#858585"/><rect x="2" y="9" width="10" height="1" fill="#a0a0a0"/><rect x="12" y="9" width="1" height="1" fill="#f4f4f4"/><rect x="13" y="9" width="3" height="1" fill="#858585"/><rect x="2" y="10" width="1" height="1" fill="#858585"/><rect x="3" y="10" width="12" height="1" fill="#a0a0a0"/><rect x="3" y="11" width="12" height="1" fill="#a0a0a0"/><rect x="3" y="12" width="12" height="1" fill="#a0a0a0"/><rect x="3" y="13" width="12" height="1" fill="#a0a0a0"/><rect x="3" y="14" width="12" height="1" fill="#a0a0a0"/></svg>
<svg width="5" height="3" style="left:382px;top:37px" shape-rendering="crispEdges"><rect x="0" y="0" width="5" height="1" fill="#8c8c8c"/><rect x="1" y="1" width="3" height="1" fill="#8c8c8c"/><rect x="2" y="2" width="1" height="1" fill="#8c8c8c"/></svg>
<svg width="14" height="15" style="left:396px;top:31px" shape-rendering="crispEdges"><rect x="11" y="0" width="2" height="1" fill="#8a8a8a"/><rect x="10" y="1" width="1" height="1" fill="#8a8a8a"/><rect x="11" y="1" width="2" height="1" fill="#a4a4a4"/><rect x="13" y="1" width="1" height="1" fill="#8a8a8a"/><rect x="9" y="2" width="1" height="1" fill="#8a8a8a"/><rect x="10" y="2" width="3" height="1" fill="#a4a4a4"/><rect x="13" y="2" width="1" height="1" fill="#8a8a8a"/><rect x="8" y="3" width="1" height="1" fill="#8a8a8a"/><rect x="9" y="3" width="3" height="1" fill="#a4a4a4"/><rect x="12" y="3" width="1" height="1" fill="#8a8a8a"/><rect x="7" y="4" width="1" height="1" fill="#8a8a8a"/><rect x="8" y="4" width="3" height="1" fill="#a4a4a4"/><rect x="11" y="4" width="1" height="1" fill="#8a8a8a"/><rect x="6" y="5" width="1" height="1" fill="#8a8a8a"/><rect x="7" y="5" width="3" height="1" fill="#a4a4a4"/><rect x="10" y="5" width="1" height="1" fill="#8a8a8a"/><rect x="5" y="6" width="1" height="1" fill="#8a8a8a"/><rect x="6" y="6" width="3" height="1" fill="#a4a4a4"/><rect x="9" y="6" width="1" height="1" fill="#8a8a8a"/><rect x="4" y="7" width="1" height="1" fill="#8a8a8a"/><rect x="5" y="7" width="3" height="1" fill="#a4a4a4"/><rect x="8" y="7" width="1" height="1" fill="#8a8a8a"/><rect x="3" y="8" width="1" height="1" fill="#8a8a8a"/><rect x="4" y="8" width="3" height="1" fill="#a4a4a4"/><rect x="7" y="8" width="1" height="1" fill="#8a8a8a"/><rect x="2" y="9" width="1" height="1" fill="#8a8a8a"/><rect x="3" y="9" width="3" height="1" fill="#a4a4a4"/><rect x="6" y="9" width="1" height="1" fill="#8a8a8a"/><rect x="1" y="10" width="12" height="1" fill="#8a8a8a"/><rect x="1" y="11" width="12" height="1" fill="#8a8a8a"/><rect x="0" y="12" width="13" height="1" fill="#8a8a8a"/><rect x="0" y="13" width="13" height="1" fill="#8a8a8a"/><rect x="1" y="14" width="12" height="1" fill="#8a8a8a"/></svg>
<svg width="5" height="3" style="left:420px;top:37px" shape-rendering="crispEdges"><rect x="0" y="0" width="5" height="1" fill="#8c8c8c"/><rect x="1" y="1" width="3" height="1" fill="#8c8c8c"/><rect x="2" y="2" width="1" height="1" fill="#8c8c8c"/></svg>
<svg width="13" height="14" style="left:434px;top:32px" shape-rendering="crispEdges"><rect x="6" y="0" width="1" height="1" fill="#8a8a8a"/><rect x="5" y="1" width="3" height="1" fill="#8a8a8a"/><rect x="5" y="2" width="3" height="1" fill="#8a8a8a"/><rect x="4" y="3" width="5" height="1" fill="#8a8a8a"/><rect x="4" y="4" width="1" height="1" fill="#8a8a8a"/><rect x="5" y="4" width="2" height="1" fill="#f0f0f0"/><rect x="7" y="4" width="2" height="1" fill="#8a8a8a"/><rect x="3" y="5" width="2" height="1" fill="#8a8a8a"/><rect x="5" y="5" width="1" height="1" fill="#f0f0f0"/><rect x="6" y="5" width="4" height="1" fill="#8a8a8a"/><rect x="3" y="6" width="7" height="1" fill="#8a8a8a"/><rect x="2" y="7" width="2" height="1" fill="#8a8a8a"/><rect x="4" y="7" width="4" height="1" fill="#f0f0f0"/><rect x="8" y="7" width="3" height="1" fill="#8a8a8a"/><rect x="2" y="8" width="2" height="1" fill="#8a8a8a"/><rect x="4" y="8" width="5" height="1" fill="#f0f0f0"/><rect x="9" y="8" width="2" height="1" fill="#8a8a8a"/><rect x="0" y="9" width="13" height="1" fill="#8a8a8a"/><rect x="0" y="10" width="13" height="1" fill="#8a8a8a"/><rect x="1" y="11" width="12" height="1" fill="#8a8a8a"/><rect x="1" y="12" width="12" height="1" fill="#8a8a8a"/><rect x="1" y="13" width="12" height="1" fill="#8a8a8a"/></svg>
<svg width="5" height="3" style="left:458px;top:37px" shape-rendering="crispEdges"><rect x="0" y="0" width="5" height="1" fill="#8c8c8c"/><rect x="1" y="1" width="3" height="1" fill="#8c8c8c"/><rect x="2" y="2" width="1" height="1" fill="#8c8c8c"/></svg>
<!-- combos -->
<div class="a" style="left:467px;top:27px;width:187px;height:22px;border:1px solid #a8acb4;background:#efefef"></div>
<div class="a" style="left:654px;top:27px;width:50px;height:22px;border:1px solid #a8acb4;background:#efefef"></div>
<svg width="7" height="6" style="left:641px;top:36px" shape-rendering="crispEdges"><rect x="0" y="0" width="1" height="1" fill="#a8a8a8"/><rect x="6" y="0" width="1" height="1" fill="#a8a8a8"/><rect x="0" y="1" width="2" height="1" fill="#a8a8a8"/><rect x="5" y="1" width="2" height="1" fill="#a8a8a8"/><rect x="0" y="2" width="3" height="1" fill="#a8a8a8"/><rect x="4" y="2" width="3" height="1" fill="#a8a8a8"/><rect x="1" y="3" width="5" height="1" fill="#a8a8a8"/><rect x="2" y="4" width="3" height="1" fill="#a8a8a8"/><rect x="3" y="5" width="1" height="1" fill="#a8a8a8"/></svg>
<svg width="7" height="6" style="left:691px;top:36px" shape-rendering="crispEdges"><rect x="0" y="0" width="1" height="1" fill="#a8a8a8"/><rect x="6" y="0" width="1" height="1" fill="#a8a8a8"/><rect x="0" y="1" width="2" height="1" fill="#a8a8a8"/><rect x="5" y="1" width="2" height="1" fill="#a8a8a8"/><rect x="0" y="2" width="3" height="1" fill="#a8a8a8"/><rect x="4" y="2" width="3" height="1" fill="#a8a8a8"/><rect x="1" y="3" width="5" height="1" fill="#a8a8a8"/><rect x="2" y="4" width="3" height="1" fill="#a8a8a8"/><rect x="3" y="5" width="1" height="1" fill="#a8a8a8"/></svg>
<svg width="16" height="16" style="left:707px;top:30px" shape-rendering="crispEdges"><rect x="10" y="0" width="4" height="1" fill="#8a8a8a"/><rect x="13" y="1" width="1" height="1" fill="#8a8a8a"/><rect x="13" y="2" width="1" height="1" fill="#8a8a8a"/><rect x="0" y="3" width="9" height="1" fill="#8a8a8a"/><rect x="11" y="3" width="5" height="1" fill="#8a8a8a"/><rect x="0" y="4" width="1" height="1" fill="#8a8a8a"/><rect x="1" y="4" width="7" height="1" fill="#a8a8a8"/><rect x="8" y="4" width="1" height="1" fill="#8a8a8a"/><rect x="12" y="4" width="3" height="1" fill="#8a8a8a"/><rect x="0" y="5" width="1" height="1" fill="#8a8a8a"/><rect x="1" y="5" width="7" height="1" fill="#a8a8a8"/><rect x="8" y="5" width="1" height="1" fill="#8a8a8a"/><rect x="13" y="5" width="1" height="1" fill="#8a8a8a"/><rect x="0" y="6" width="1" height="1" fill="#8a8a8a"/><rect x="1" y="6" width="7" height="1" fill="#a8a8a8"/><rect x="8" y="6" width="1" height="1" fill="#8a8a8a"/><rect x="0" y="7" width="1" height="1" fill="#8a8a8a"/><rect x="1" y="7" width="2" height="1" fill="#a8a8a8"/><rect x="3" y="7" width="12" height="1" fill="#8a8a8a"/><rect x="0" y="8" width="1" height="1" fill="#8a8a8a"/><rect x="1" y="8" width="2" height="1" fill="#a8a8a8"/><rect x="3" y="8" width="1" height="1" fill="#8a8a8a"/><rect x="4" y="8" width="10" height="1" fill="#a8a8a8"/><rect x="14" y="8" width="1" height="1" fill="#8a8a8a"/><rect x="0" y="9" width="1" height="1" fill="#8a8a8a"/><rect x="1" y="9" width="2" height="1" fill="#a8a8a8"/><rect x="3" y="9" width="1" height="1" fill="#8a8a8a"/><rect x="4" y="9" width="10" height="1" fill="#a8a8a8"/><rect x="14" y="9" width="1" height="1" fill="#8a8a8a"/><rect x="0" y="10" width="1" height="1" fill="#8a8a8a"/><rect x="1" y="10" width="2" height="1" fill="#a8a8a8"/><rect x="3" y="10" width="1" height="1" fill="#8a8a8a"/><rect x="4" y="10" width="10" height="1" fill="#a8a8a8"/><rect x="14" y="10" width="1" height="1" fill="#8a8a8a"/><rect x="0" y="11" width="1" height="1" fill="#8a8a8a"/><rect x="1" y="11" width="2" height="1" fill="#a8a8a8"/><rect x="3" y="11" width="1" height="1" fill="#8a8a8a"/><rect x="4" y="11" width="10" height="1" fill="#a8a8a8"/><rect x="14" y="11" width="1" height="1" fill="#8a8a8a"/><rect x="0" y="12" width="1" height="1" fill="#8a8a8a"/><rect x="1" y="12" width="2" height="1" fill="#a8a8a8"/><rect x="3" y="12" width="1" height="1" fill="#8a8a8a"/><rect x="4" y="12" width="10" height="1" fill="#a8a8a8"/><rect x="14" y="12" width="1" height="1" fill="#8a8a8a"/><rect x="0" y="13" width="4" height="1" fill="#8a8a8a"/><rect x="4" y="13" width="10" height="1" fill="#a8a8a8"/><rect x="14" y="13" width="1" height="1" fill="#8a8a8a"/><rect x="3" y="14" width="1" height="1" fill="#8a8a8a"/><rect x="4" y="14" width="10" height="1" fill="#a8a8a8"/><rect x="14" y="14" width="1" height="1" fill="#8a8a8a"/><rect x="3" y="15" width="12" height="1" fill="#8a8a8a"/></svg>
<svg width="9" height="5" style="left:740px;top:30px" shape-rendering="crispEdges"><rect x="0" y="0" width="2" height="1" fill="#404040"/><rect x="5" y="0" width="2" height="1" fill="#404040"/><rect x="1" y="1" width="2" height="1" fill="#404040"/><rect x="6" y="1" width="2" height="1" fill="#404040"/><rect x="2" y="2" width="2" height="1" fill="#404040"/><rect x="7" y="2" width="2" height="1" fill="#404040"/><rect x="1" y="3" width="2" height="1" fill="#404040"/><rect x="6" y="3" width="2" height="1" fill="#404040"/><rect x="0" y="4" width="2" height="1" fill="#404040"/><rect x="5" y="4" width="2" height="1" fill="#404040"/></svg>
<svg width="4" height="16" style="left:756px;top:31px" shape-rendering="crispEdges"><path d="M0 0.5H3M0 2.5H3M0 4.5H3M0 6.5H3M0 8.5H3M0 10.5H3M0 12.5H3M0 14.5H3" stroke="#a8a8a8"/></svg>
<!-- zoom icons -->
<svg width="16" height="16" style="left:765px;top:31px" shape-rendering="crispEdges"><rect x="3" y="0" width="5" height="1" fill="#404040"/><rect x="1" y="1" width="2" height="1" fill="#404040"/><rect x="3" y="1" width="5" height="1" fill="#fbfbfb"/><rect x="8" y="1" width="2" height="1" fill="#404040"/><rect x="1" y="2" width="1" height="1" fill="#404040"/><rect x="2" y="2" width="7" height="1" fill="#fbfbfb"/><rect x="9" y="2" width="1" height="1" fill="#404040"/><rect x="0" y="3" width="1" height="1" fill="#404040"/><rect x="1" y="3" width="2" height="1" fill="#fbfbfb"/><rect x="3" y="3" width="5" height="1" fill="#000000"/><rect x="8" y="3" width="2" height="1" fill="#fbfbfb"/><rect x="10" y="3" width="1" height="1" fill="#404040"/><rect x="0" y="4" width="1" height="1" fill="#404040"/><rect x="1" y="4" width="2" height="1" fill="#fbfbfb"/><rect x="3" y="4" width="1" height="1" fill="#000000"/><rect x="4" y="4" width="3" height="1" fill="#fbfbfb"/><rect x="7" y="4" width="1" height="1" fill="#000000"/><rect x="8" y="4" width="2" height="1" fill="#fbfbfb"/><rect x="10" y="4" width="1" height="1" fill="#404040"/><rect x="0" y="5" width="1" height="1" fill="#404040"/><rect x="1" y="5" width="2" height="1" fill="#fbfbfb"/><rect x="3" y="5" width="1" height="1" fill="#000000"/><rect x="4" y="5" width="3" height="1" fill="#fbfbfb"/><rect x="7" y="5" width="1" height="1" fill="#000000"/><rect x="8" y="5" width="2" height="1" fill="#fbfbfb"/><rect x="10" y="5" width="1" height="1" fill="#404040"/><rect x="0" y="6" width="1" height="1" fill="#404040"/><rect x="1" y="6" width="2" height="1" fill="#fbfbfb"/><rect x="3" y="6" width="1" height="1" fill="#000000"/><rect x="4" y="6" width="3" height="1" fill="#fbfbfb"/><rect x="7" y="6" width="1" height="1" fill="#000000"/><rect x="8" y="6" width="2" height="1" fill="#fbfbfb"/><rect x="10" y="6" width="1" height="1" fill="#404040"/><rect x="0" y="7" width="1" height="1" fill="#404040"/><rect x="1" y="7" width="2" height="1" fill="#fbfbfb"/><rect x="3" y="7" width="5" height="1" fill="#000000"/><rect x="8" y="7" width="2" height="1" fill="#fbfbfb"/><rect x="10" y="7" width="1" height="1" fill="#404040"/><rect x="1" y="8" width="1" height="1" fill="#404040"/><rect x="2" y="8" width="7" height="1" fill="#fbfbfb"/><rect x="9" y="8" width="1" height="1" fill="#404040"/><rect x="1" y="9" width="2" height="1" fill="#404040"/><rect x="3" y="9" width="5" height="1" fill="#fbfbfb"/><rect x="8" y="9" width="1" height="1" fill="#404040"/><rect x="9" y="9" width="2" height="1" fill="#0a3080"/><rect x="3" y="10" width="5" height="1" fill="#404040"/><rect x="8" y="10" width="4" height="1" fill="#0a3080"/><rect x="9" y="11" width="4" height="1" fill="#0a3080"/><rect x="10" y="12" width="4" height="1" fill="#0a3080"/><rect x="11" y="13" width="4" height="1" fill="#0a3080"/><rect x="12" y="14" width="3" height="1" fill="#0a3080"/><rect x="13" y="15" width="1" height="1" fill="#0a3080"/></svg>
<svg width="16" height="16" style="left:787px;top:31px" shape-rendering="crispEdges"><rect x="3" y="0" width="5" height="1" fill="#8c8c8c"/><rect x="1" y="1" width="2" height="1" fill="#8c8c8c"/><rect x="3" y="1" width="5" height="1" fill="#a8a8a8"/><rect x="8" y="1" width="2" height="1" fill="#8c8c8c"/><rect x="1" y="2" width="1" height="1" fill="#8c8c8c"/><rect x="2" y="2" width="7" height="1" fill="#a8a8a8"/><rect x="9" y="2" width="1" height="1" fill="#8c8c8c"/><rect x="0" y="3" width="1" height="1" fill="#8c8c8c"/><rect x="1" y="3" width="2" height="1" fill="#a8a8a8"/><rect x="3" y="3" width="1" height="1" fill="#606060"/><rect x="4" y="3" width="3" height="1" fill="#a8a8a8"/><rect x="7" y="3" width="1" height="1" fill="#606060"/><rect x="8" y="3" width="2" height="1" fill="#a8a8a8"/><rect x="10" y="3" width="1" height="1" fill="#8c8c8c"/><rect x="0" y="4" width="1" height="1" fill="#8c8c8c"/><rect x="1" y="4" width="2" height="1" fill="#a8a8a8"/><rect x="3" y="4" width="1" height="1" fill="#606060"/><rect x="4" y="4" width="1" height="1" fill="#a8a8a8"/><rect x="5" y="4" width="1" height="1" fill="#606060"/><rect x="6" y="4" width="1" height="1" fill="#a8a8a8"/><rect x="7" y="4" width="1" height="1" fill="#606060"/><rect x="8" y="4" width="2" height="1" fill="#a8a8a8"/><rect x="10" y="4" width="1" height="1" fill="#8c8c8c"/><rect x="0" y="5" width="1" height="1" fill="#8c8c8c"/><rect x="1" y="5" width="2" height="1" fill="#a8a8a8"/><rect x="3" y="5" width="1" height="1" fill="#606060"/><rect x="4" y="5" width="3" height="1" fill="#a8a8a8"/><rect x="7" y="5" width="1" height="1" fill="#606060"/><rect x="8" y="5" width="2" height="1" fill="#a8a8a8"/><rect x="10" y="5" width="1" height="1" fill="#8c8c8c"/><rect x="0" y="6" width="1" height="1" fill="#8c8c8c"/><rect x="1" y="6" width="2" height="1" fill="#a8a8a8"/><rect x="3" y="6" width="1" height="1" fill="#606060"/><rect x="4" y="6" width="1" height="1" fill="#a8a8a8"/><rect x="5" y="6" width="1" height="1" fill="#606060"/><rect x="6" y="6" width="1" height="1" fill="#a8a8a8"/><rect x="7" y="6" width="1" height="1" fill="#606060"/><rect x="8" y="6" width="2" height="1" fill="#a8a8a8"/><rect x="10" y="6" width="1" height="1" fill="#8c8c8c"/><rect x="0" y="7" width="1" height="1" fill="#8c8c8c"/><rect x="1" y="7" width="2" height="1" fill="#a8a8a8"/><rect x="3" y="7" width="1" height="1" fill="#606060"/><rect x="4" y="7" width="3" height="1" fill="#a8a8a8"/><rect x="7" y="7" width="1" height="1" fill="#606060"/><rect x="8" y="7" width="2" height="1" fill="#a8a8a8"/><rect x="10" y="7" width="1" height="1" fill="#8c8c8c"/><rect x="1" y="8" width="1" height="1" fill="#8c8c8c"/><rect x="2" y="8" width="7" height="1" fill="#a8a8a8"/><rect x="9" y="8" width="1" height="1" fill="#8c8c8c"/><rect x="1" y="9" width="2" height="1" fill="#8c8c8c"/><rect x="3" y="9" width="5" height="1" fill="#a8a8a8"/><rect x="8" y="9" width="1" height="1" fill="#8c8c8c"/><rect x="9" y="9" width="2" height="1" fill="#8c8c8c"/><rect x="3" y="10" width="5" height="1" fill="#8c8c8c"/><rect x="8" y="10" width="4" height="1" fill="#8c8c8c"/><rect x="9" y="11" width="4" height="1" fill="#8c8c8c"/><rect x="10" y="12" width="4" height="1" fill="#8c8c8c"/><rect x="11" y="13" width="4" height="1" fill="#8c8c8c"/><rect x="12" y="14" width="3" height="1" fill="#8c8c8c"/><rect x="13" y="15" width="1" height="1" fill="#8c8c8c"/></svg>
<svg width="16" height="16" style="left:809px;top:31px" shape-rendering="crispEdges"><rect x="3" y="0" width="5" height="1" fill="#404040"/><rect x="1" y="1" width="2" height="1" fill="#404040"/><rect x="3" y="1" width="5" height="1" fill="#fbfbfb"/><rect x="8" y="1" width="2" height="1" fill="#404040"/><rect x="1" y="2" width="1" height="1" fill="#404040"/><rect x="2" y="2" width="7" height="1" fill="#fbfbfb"/><rect x="9" y="2" width="1" height="1" fill="#404040"/><rect x="0" y="3" width="1" height="1" fill="#404040"/><rect x="1" y="3" width="4" height="1" fill="#fbfbfb"/><rect x="5" y="3" width="1" height="1" fill="#000000"/><rect x="6" y="3" width="4" height="1" fill="#fbfbfb"/><rect x="10" y="3" width="1" height="1" fill="#404040"/><rect x="0" y="4" width="1" height="1" fill="#404040"/><rect x="1" y="4" width="4" height="1" fill="#fbfbfb"/><rect x="5" y="4" width="1" height="1" fill="#000000"/><rect x="6" y="4" width="4" height="1" fill="#fbfbfb"/><rect x="10" y="4" width="1" height="1" fill="#404040"/><rect x="0" y="5" width="1" height="1" fill="#404040"/><rect x="1" y="5" width="2" height="1" fill="#fbfbfb"/><rect x="3" y="5" width="5" height="1" fill="#000000"/><rect x="8" y="5" width="2" height="1" fill="#fbfbfb"/><rect x="10" y="5" width="1" height="1" fill="#404040"/><rect x="0" y="6" width="1" height="1" fill="#404040"/><rect x="1" y="6" width="4" height="1" fill="#fbfbfb"/><rect x="5" y="6" width="1" height="1" fill="#000000"/><rect x="6" y="6" width="4" height="1" fill="#fbfbfb"/><rect x="10" y="6" width="1" height="1" fill="#404040"/><rect x="0" y="7" width="1" height="1" fill="#404040"/><rect x="1" y="7" width="4" height="1" fill="#fbfbfb"/><rect x="5" y="7" width="1" height="1" fill="#000000"/><rect x="6" y="7" width="4" height="1" fill="#fbfbfb"/><rect x="10" y="7" width="1" height="1" fill="#404040"/><rect x="1" y="8" width="1" height="1" fill="#404040"/><rect x="2" y="8" width="7" height="1" fill="#fbfbfb"/><rect x="9" y="8" width="1" height="1" fill="#404040"/><rect x="1" y="9" width="2" height="1" fill="#404040"/><rect x="3" y="9" width="5" height="1" fill="#fbfbfb"/><rect x="8" y="9" width="1" height="1" fill="#404040"/><rect x="9" y="9" width="2" height="1" fill="#0a3080"/><rect x="3" y="10" width="5" height="1" fill="#404040"/><rect x="8" y="10" width="4" height="1" fill="#0a3080"/><rect x="9" y="11" width="4" height="1" fill="#0a3080"/><rect x="10" y="12" width="4" height="1" fill="#0a3080"/><rect x="11" y="13" width="4" height="1" fill="#0a3080"/><rect x="12" y="14" width="3" height="1" fill="#0a3080"/><rect x="13" y="15" width="1" height="1" fill="#0a3080"/></svg>
<svg width="16" height="16" style="left:831px;top:31px" shape-rendering="crispEdges"><rect x="3" y="0" width="5" height="1" fill="#404040"/><rect x="1" y="1" width="2" height="1" fill="#404040"/><rect x="3" y="1" width="5" height="1" fill="#fbfbfb"/><rect x="8" y="1" width="2" height="1" fill="#404040"/><rect x="1" y="2" width="1" height="1" fill="#404040"/><rect x="2" y="2" width="7" height="1" fill="#fbfbfb"/><rect x="9" y="2" width="1" height="1" fill="#404040"/><rect x="0" y="3" width="1" height="1" fill="#404040"/><rect x="1" y="3" width="9" height="1" fill="#fbfbfb"/><rect x="10" y="3" width="1" height="1" fill="#404040"/><rect x="0" y="4" width="1" height="1" fill="#404040"/><rect x="1" y="4" width="9" height="1" fill="#fbfbfb"/><rect x="10" y="4" width="1" height="1" fill="#404040"/><rect x="0" y="5" width="1" height="1" fill="#404040"/><rect x="1" y="5" width="2" height="1" fill="#fbfbfb"/><rect x="3" y="5" width="5" height="1" fill="#000000"/><rect x="8" y="5" width="2" height="1" fill="#fbfbfb"/><rect x="10" y="5" width="1" height="1" fill="#404040"/><rect x="0" y="6" width="1" height="1" fill="#404040"/><rect x="1" y="6" width="9" height="1" fill="#fbfbfb"/><rect x="10" y="6" width="1" height="1" fill="#404040"/><rect x="0" y="7" width="1" height="1" fill="#404040"/><rect x="1" y="7" width="9" height="1" fill="#fbfbfb"/><rect x="10" y="7" width="1" height="1" fill="#404040"/><rect x="1" y="8" width="1" height="1" fill="#404040"/><rect x="2" y="8" width="7" height="1" fill="#fbfbfb"/><rect x="9" y="8" width="1" height="1" fill="#404040"/><rect x="1" y="9" width="2" height="1" fill="#404040"/><rect x="3" y="9" width="5" height="1" fill="#fbfbfb"/><rect x="8" y="9" width="1" height="1" fill="#404040"/><rect x="9" y="9" width="2" height="1" fill="#0a3080"/><rect x="3" y="10" width="5" height="1" fill="#404040"/><rect x="8" y="10" width="4" height="1" fill="#0a3080"/><rect x="9" y="11" width="4" height="1" fill="#0a3080"/><rect x="10" y="12" width="4" height="1" fill="#0a3080"/><rect x="11" y="13" width="4" height="1" fill="#0a3080"/><rect x="12" y="14" width="3" height="1" fill="#0a3080"/><rect x="13" y="15" width="1" height="1" fill="#0a3080"/></svg>
<div class="a" style="left:849px;top:27px;width:70px;height:22px;border:1px solid #b8b8b8;background:#fff"></div>
<div class="t" style="left:853px;top:32px;font-size:11px;letter-spacing:-0.1px">100%</div>
<svg width="7" height="6" style="left:906px;top:36px" shape-rendering="crispEdges"><rect x="0" y="0" width="1" height="1" fill="#404040"/><rect x="6" y="0" width="1" height="1" fill="#404040"/><rect x="0" y="1" width="2" height="1" fill="#404040"/><rect x="5" y="1" width="2" height="1" fill="#404040"/><rect x="0" y="2" width="3" height="1" fill="#404040"/><rect x="4" y="2" width="3" height="1" fill="#404040"/><rect x="1" y="3" width="5" height="1" fill="#404040"/><rect x="2" y="4" width="3" height="1" fill="#404040"/><rect x="3" y="5" width="1" height="1" fill="#404040"/></svg>
<!-- row 2 -->
<svg width="4" height="16" style="left:57px;top:56px" shape-rendering="crispEdges"><path d="M0 0.5H3M0 2.5H3M0 4.5H3M0 6.5H3M0 8.5H3M0 10.5H3M0 12.5H3M0 14.5H3" stroke="#a8a8a8"/></svg>
<svg width="13" height="15" style="left:66px;top:56px" shape-rendering="crispEdges"><rect x="0" y="0" width="4" height="1" fill="#383838"/><rect x="0" y="1" width="1" height="1" fill="#383838"/><rect x="1" y="1" width="3" height="1" fill="#f4f4f4"/><rect x="4" y="1" width="3" height="1" fill="#383838"/><rect x="0" y="2" width="1" height="1" fill="#383838"/><rect x="1" y="2" width="5" height="1" fill="#f4f4f4"/><rect x="6" y="2" width="1" height="1" fill="#383838"/><rect x="0" y="3" width="1" height="1" fill="#383838"/><rect x="1" y="3" width="5" height="1" fill="#f4f4f4"/><rect x="6" y="3" width="1" height="1" fill="#383838"/><rect x="0" y="4" width="7" height="1" fill="#383838"/><rect x="2" y="5" width="8" height="1" fill="#383838"/><rect x="2" y="6" width="1" height="1" fill="#383838"/><rect x="3" y="6" width="2" height="1" fill="#f4f4f4"/><rect x="5" y="6" width="2" height="1" fill="#383838"/><rect x="7" y="6" width="3" height="1" fill="#f4f4f4"/><rect x="10" y="6" width="3" height="1" fill="#383838"/><rect x="2" y="7" width="5" height="1" fill="#383838"/><rect x="7" y="7" width="5" height="1" fill="#f4f4f4"/><rect x="12" y="7" width="1" height="1" fill="#383838"/><rect x="2" y="8" width="1" height="1" fill="#383838"/><rect x="3" y="8" width="2" height="1" fill="#f4f4f4"/><rect x="5" y="8" width="2" height="1" fill="#383838"/><rect x="7" y="8" width="5" height="1" fill="#f4f4f4"/><rect x="12" y="8" width="1" height="1" fill="#383838"/><rect x="2" y="9" width="1" height="1" fill="#383838"/><rect x="3" y="9" width="2" height="1" fill="#f4f4f4"/><rect x="5" y="9" width="8" height="1" fill="#383838"/><rect x="2" y="10" width="1" height="1" fill="#383838"/><rect x="3" y="10" width="2" height="1" fill="#f4f4f4"/><rect x="5" y="10" width="1" height="1" fill="#383838"/><rect x="2" y="11" width="1" height="1" fill="#383838"/><rect x="3" y="11" width="2" height="1" fill="#f4f4f4"/><rect x="5" y="11" width="5" height="1" fill="#383838"/><rect x="2" y="12" width="5" height="1" fill="#383838"/><rect x="7" y="12" width="3" height="1" fill="#f4f4f4"/><rect x="10" y="12" width="3" height="1" fill="#383838"/><rect x="6" y="13" width="1" height="1" fill="#383838"/><rect x="7" y="13" width="5" height="1" fill="#f4f4f4"/><rect x="12" y="13" width="1" height="1" fill="#383838"/><rect x="6" y="14" width="7" height="1" fill="#383838"/></svg>

<div class="a" style="left:6px;top:78px;width:167px;height:2px;background:#fdfdfd"></div>
<div class="a" style="left:6px;top:80px;width:167px;height:14px;background:linear-gradient(#efefef 0px,#eeeeee 3px,#dedede 4px,#c8c8c8 9px,#b6b6b6 14px)"></div>
<svg width="14" height="11" style="left:7px;top:81px" shape-rendering="crispEdges"><rect x="0" y="0" width="7" height="1" fill="#4a4a4a"/><rect x="0" y="1" width="1" height="1" fill="#4a4a4a"/><rect x="1" y="1" width="5" height="1" fill="#f8c888"/><rect x="6" y="1" width="8" height="1" fill="#4a4a4a"/><rect x="0" y="2" width="1" height="1" fill="#4a4a4a"/><rect x="1" y="2" width="12" height="1" fill="#f4f080"/><rect x="13" y="2" width="1" height="1" fill="#4a4a4a"/><rect x="0" y="3" width="1" height="1" fill="#4a4a4a"/><rect x="1" y="3" width="12" height="1" fill="#f4f080"/><rect x="13" y="3" width="1" height="1" fill="#4a4a4a"/><rect x="0" y="4" width="1" height="1" fill="#4a4a4a"/><rect x="1" y="4" width="12" height="1" fill="#f4f080"/><rect x="13" y="4" width="1" height="1" fill="#4a4a4a"/><rect x="0" y="5" width="1" height="1" fill="#4a4a4a"/><rect x="1" y="5" width="12" height="1" fill="#f4f080"/><rect x="13" y="5" width="1" height="1" fill="#4a4a4a"/><rect x="0" y="6" width="1" height="1" fill="#4a4a4a"/><rect x="1" y="6" width="12" height="1" fill="#f4f080"/><rect x="13" y="6" width="1" height="1" fill="#4a4a4a"/><rect x="0" y="7" width="1" height="1" fill="#4a4a4a"/><rect x="1" y="7" width="12" height="1" fill="#f8f6b8"/><rect x="13" y="7" width="1" height="1" fill="#4a4a4a"/><rect x="0" y="8" width="1" height="1" fill="#4a4a4a"/><rect x="1" y="8" width="12" height="1" fill="#f8f6b8"/><rect x="13" y="8" width="1" height="1" fill="#4a4a4a"/><rect x="0" y="9" width="1" height="1" fill="#4a4a4a"/><rect x="1" y="9" width="12" height="1" fill="#fffde8"/><rect x="13" y="9" width="1" height="1" fill="#4a4a4a"/><rect x="0" y="10" width="14" height="1" fill="#4a4a4a"/></svg>
<div class="t" style="left:25px;top:80px;letter-spacing:-0.15px">Tools</div>
<div class="a" style="left:9px;top:94px;width:23px;height:20px;border:1px solid #3c98f0;background:#cce4f7"></div>
<div class="a" style="left:55px;top:94px;width:23px;height:20px;border:1px solid #3c98f0;background:#cce4f7"></div>
<svg width="8" height="14" style="left:16px;top:97px" shape-rendering="crispEdges"><rect x="0" y="0" width="1" height="1" fill="#303030"/><rect x="0" y="1" width="2" height="1" fill="#303030"/><rect x="0" y="2" width="1" height="1" fill="#303030"/><rect x="1" y="2" width="1" height="1" fill="#f4f4f4"/><rect x="2" y="2" width="1" height="1" fill="#303030"/><rect x="0" y="3" width="1" height="1" fill="#303030"/><rect x="1" y="3" width="2" height="1" fill="#f4f4f4"/><rect x="3" y="3" width="1" height="1" fill="#303030"/><rect x="0" y="4" width="1" height="1" fill="#303030"/><rect x="1" y="4" width="3" height="1" fill="#f4f4f4"/><rect x="4" y="4" width="1" height="1" fill="#303030"/><rect x="0" y="5" width="1" height="1" fill="#303030"/><rect x="1" y="5" width="2" height="1" fill="#f4f4f4"/><rect x="3" y="5" width="2" height="1" fill="#b0b0b0"/><rect x="5" y="5" width="1" height="1" fill="#303030"/><rect x="0" y="6" width="1" height="1" fill="#303030"/><rect x="1" y="6" width="2" height="1" fill="#f4f4f4"/><rect x="3" y="6" width="3" height="1" fill="#b0b0b0"/><rect x="6" y="6" width="1" height="1" fill="#303030"/><rect x="0" y="7" width="1" height="1" fill="#303030"/><rect x="1" y="7" width="1" height="1" fill="#f4f4f4"/><rect x="2" y="7" width="2" height="1" fill="#b0b0b0"/><rect x="4" y="7" width="4" height="1" fill="#303030"/><rect x="0" y="8" width="1" height="1" fill="#303030"/><rect x="1" y="8" width="1" height="1" fill="#f4f4f4"/><rect x="2" y="8" width="1" height="1" fill="#b0b0b0"/><rect x="3" y="8" width="2" height="1" fill="#303030"/><rect x="0" y="9" width="1" height="1" fill="#303030"/><rect x="1" y="9" width="1" height="1" fill="#b0b0b0"/><rect x="2" y="9" width="1" height="1" fill="#303030"/><rect x="4" y="9" width="1" height="1" fill="#303030"/><rect x="0" y="10" width="2" height="1" fill="#303030"/><rect x="4" y="10" width="2" height="1" fill="#303030"/><rect x="0" y="11" width="1" height="1" fill="#303030"/><rect x="5" y="11" width="1" height="1" fill="#303030"/><rect x="5" y="12" width="2" height="1" fill="#303030"/><rect x="6" y="13" width="1" height="1" fill="#303030"/></svg>
<svg width="13" height="13" style="left:36px;top:98px" shape-rendering="crispEdges"><rect x="0" y="0" width="2" height="1" fill="#303030"/><rect x="3" y="0" width="3" height="1" fill="#303030"/><rect x="7" y="0" width="3" height="1" fill="#303030"/><rect x="11" y="0" width="2" height="1" fill="#303030"/><rect x="0" y="1" width="1" height="1" fill="#303030"/><rect x="0" y="2" width="1" height="1" fill="#303030"/><rect x="6" y="2" width="5" height="1" fill="#303030"/><rect x="12" y="2" width="1" height="1" fill="#303030"/><rect x="6" y="3" width="1" height="1" fill="#303030"/><rect x="7" y="3" width="3" height="1" fill="#c0c0c0"/><rect x="10" y="3" width="1" height="1" fill="#303030"/><rect x="12" y="3" width="1" height="1" fill="#303030"/><rect x="0" y="4" width="1" height="1" fill="#303030"/><rect x="6" y="4" width="1" height="1" fill="#303030"/><rect x="7" y="4" width="3" height="1" fill="#c0c0c0"/><rect x="10" y="4" width="1" height="1" fill="#303030"/><rect x="0" y="5" width="1" height="1" fill="#303030"/><rect x="6" y="5" width="5" height="1" fill="#303030"/><rect x="12" y="5" width="1" height="1" fill="#303030"/><rect x="0" y="6" width="1" height="1" fill="#303030"/><rect x="8" y="6" width="1" height="1" fill="#303030"/><rect x="12" y="6" width="1" height="1" fill="#303030"/><rect x="2" y="7" width="7" height="1" fill="#303030"/><rect x="0" y="8" width="1" height="1" fill="#303030"/><rect x="2" y="8" width="1" height="1" fill="#303030"/><rect x="3" y="8" width="3" height="1" fill="#c0c0c0"/><rect x="6" y="8" width="1" height="1" fill="#303030"/><rect x="12" y="8" width="1" height="1" fill="#303030"/><rect x="0" y="9" width="1" height="1" fill="#303030"/><rect x="2" y="9" width="1" height="1" fill="#303030"/><rect x="3" y="9" width="3" height="1" fill="#c0c0c0"/><rect x="6" y="9" width="1" height="1" fill="#303030"/><rect x="12" y="9" width="1" height="1" fill="#303030"/><rect x="2" y="10" width="5" height="1" fill="#303030"/><rect x="0" y="11" width="1" height="1" fill="#303030"/><rect x="12" y="11" width="1" height="1" fill="#303030"/><rect x="0" y="12" width="2" height="1" fill="#303030"/><rect x="3" y="12" width="3" height="1" fill="#303030"/><rect x="7" y="12" width="3" height="1" fill="#303030"/><rect x="11" y="12" width="2" height="1" fill="#303030"/></svg>
<svg width="9" height="11" style="left:61px;top:98px" shape-rendering="crispEdges"><rect x="4" y="0" width="1" height="1" fill="#8c8070"/><rect x="4" y="1" width="1" height="1" fill="#8c8070"/><rect x="1" y="3" width="3" height="1" fill="#404040"/><rect x="4" y="3" width="1" height="1" fill="#8c8070"/><rect x="5" y="3" width="3" height="1" fill="#404040"/><rect x="0" y="4" width="1" height="1" fill="#404040"/><rect x="1" y="4" width="2" height="1" fill="#dcdcdc"/><rect x="3" y="4" width="5" height="1" fill="#ffffff"/><rect x="8" y="4" width="1" height="1" fill="#404040"/><rect x="0" y="5" width="1" height="1" fill="#404040"/><rect x="1" y="5" width="3" height="1" fill="#dcdcdc"/><rect x="4" y="5" width="4" height="1" fill="#ffffff"/><rect x="8" y="5" width="1" height="1" fill="#404040"/><rect x="0" y="6" width="1" height="1" fill="#404040"/><rect x="1" y="6" width="2" height="1" fill="#dcdcdc"/><rect x="3" y="6" width="5" height="1" fill="#ffffff"/><rect x="8" y="6" width="1" height="1" fill="#404040"/><rect x="1" y="7" width="3" height="1" fill="#404040"/><rect x="4" y="7" width="1" height="1" fill="#8c8070"/><rect x="5" y="7" width="3" height="1" fill="#404040"/><rect x="4" y="9" width="1" height="1" fill="#8c8070"/><rect x="4" y="10" width="1" height="1" fill="#8c8070"/></svg>
<svg width="14" height="14" style="left:82px;top:97px" shape-rendering="crispEdges"><rect x="5" y="0" width="4" height="1" fill="#383838"/><rect x="4" y="1" width="1" height="1" fill="#383838"/><rect x="5" y="1" width="1" height="1" fill="#909090"/><rect x="6" y="1" width="2" height="1" fill="#f0f0f0"/><rect x="8" y="1" width="1" height="1" fill="#909090"/><rect x="9" y="1" width="1" height="1" fill="#383838"/><rect x="4" y="2" width="1" height="1" fill="#383838"/><rect x="5" y="2" width="1" height="1" fill="#909090"/><rect x="6" y="2" width="2" height="1" fill="#f0f0f0"/><rect x="8" y="2" width="1" height="1" fill="#909090"/><rect x="9" y="2" width="1" height="1" fill="#383838"/><rect x="4" y="3" width="1" height="1" fill="#383838"/><rect x="5" y="3" width="1" height="1" fill="#909090"/><rect x="6" y="3" width="1" height="1" fill="#f0f0f0"/><rect x="7" y="3" width="2" height="1" fill="#909090"/><rect x="9" y="3" width="1" height="1" fill="#383838"/><rect x="4" y="4" width="2" height="1" fill="#383838"/><rect x="6" y="4" width="2" height="1" fill="#909090"/><rect x="8" y="4" width="2" height="1" fill="#383838"/><rect x="5" y="5" width="1" height="1" fill="#383838"/><rect x="6" y="5" width="1" height="1" fill="#f0f0f0"/><rect x="7" y="5" width="1" height="1" fill="#909090"/><rect x="8" y="5" width="1" height="1" fill="#383838"/><rect x="5" y="6" width="1" height="1" fill="#383838"/><rect x="6" y="6" width="1" height="1" fill="#f0f0f0"/><rect x="7" y="6" width="1" height="1" fill="#909090"/><rect x="8" y="6" width="1" height="1" fill="#383838"/><rect x="5" y="7" width="1" height="1" fill="#383838"/><rect x="6" y="7" width="1" height="1" fill="#f0f0f0"/><rect x="7" y="7" width="1" height="1" fill="#909090"/><rect x="8" y="7" width="1" height="1" fill="#383838"/><rect x="5" y="8" width="1" height="1" fill="#383838"/><rect x="6" y="8" width="1" height="1" fill="#f0f0f0"/><rect x="7" y="8" width="1" height="1" fill="#909090"/><rect x="8" y="8" width="1" height="1" fill="#383838"/><rect x="2" y="9" width="10" height="1" fill="#383838"/><rect x="1" y="10" width="1" height="1" fill="#383838"/><rect x="2" y="10" width="1" height="1" fill="#909090"/><rect x="3" y="10" width="8" height="1" fill="#f0f0f0"/><rect x="11" y="10" width="1" height="1" fill="#909090"/><rect x="12" y="10" width="1" height="1" fill="#383838"/><rect x="0" y="11" width="1" height="1" fill="#383838"/><rect x="1" y="11" width="1" height="1" fill="#909090"/><rect x="2" y="11" width="10" height="1" fill="#f0f0f0"/><rect x="12" y="11" width="1" height="1" fill="#909090"/><rect x="13" y="11" width="1" height="1" fill="#383838"/><rect x="0" y="12" width="14" height="1" fill="#383838"/><rect x="0" y="13" width="14" height="1" fill="#383838"/></svg>
<svg width="13" height="16" style="left:105px;top:96px" shape-rendering="crispEdges"><rect x="6" y="0" width="1" height="1" fill="#505050"/><rect x="5" y="1" width="1" height="1" fill="#505050"/><rect x="6" y="1" width="1" height="1" fill="#d8d8d8"/><rect x="7" y="1" width="1" height="1" fill="#505050"/><rect x="4" y="2" width="1" height="1" fill="#505050"/><rect x="5" y="2" width="3" height="1" fill="#d8d8d8"/><rect x="8" y="2" width="1" height="1" fill="#505050"/><rect x="3" y="3" width="3" height="1" fill="#505050"/><rect x="6" y="3" width="1" height="1" fill="#d8d8d8"/><rect x="7" y="3" width="3" height="1" fill="#505050"/><rect x="5" y="4" width="1" height="1" fill="#505050"/><rect x="6" y="4" width="1" height="1" fill="#d8d8d8"/><rect x="7" y="4" width="1" height="1" fill="#505050"/><rect x="0" y="5" width="6" height="1" fill="#505050"/><rect x="6" y="5" width="1" height="1" fill="#d8d8d8"/><rect x="7" y="5" width="6" height="1" fill="#505050"/><rect x="0" y="6" width="1" height="1" fill="#505050"/><rect x="1" y="6" width="11" height="1" fill="#d8d8d8"/><rect x="12" y="6" width="1" height="1" fill="#505050"/><rect x="0" y="7" width="13" height="1" fill="#505050"/><rect x="0" y="9" width="13" height="1" fill="#505050"/><rect x="0" y="10" width="13" height="1" fill="#505050"/><rect x="5" y="11" width="3" height="1" fill="#505050"/><rect x="3" y="12" width="7" height="1" fill="#505050"/><rect x="4" y="13" width="5" height="1" fill="#505050"/><rect x="5" y="14" width="3" height="1" fill="#505050"/><rect x="6" y="15" width="1" height="1" fill="#505050"/></svg>
<svg width="13" height="16" style="left:128px;top:96px" shape-rendering="crispEdges"><rect x="0" y="0" width="13" height="1" fill="#505050"/><rect x="0" y="1" width="13" height="1" fill="#505050"/><rect x="5" y="2" width="3" height="1" fill="#505050"/><rect x="3" y="3" width="7" height="1" fill="#505050"/><rect x="4" y="4" width="5" height="1" fill="#505050"/><rect x="5" y="5" width="3" height="1" fill="#505050"/><rect x="6" y="6" width="1" height="1" fill="#505050"/><rect x="6" y="8" width="1" height="1" fill="#505050"/><rect x="5" y="9" width="1" height="1" fill="#505050"/><rect x="6" y="9" width="1" height="1" fill="#d8d8d8"/><rect x="7" y="9" width="1" height="1" fill="#505050"/><rect x="4" y="10" width="1" height="1" fill="#505050"/><rect x="5" y="10" width="3" height="1" fill="#d8d8d8"/><rect x="8" y="10" width="1" height="1" fill="#505050"/><rect x="3" y="11" width="3" height="1" fill="#505050"/><rect x="6" y="11" width="1" height="1" fill="#d8d8d8"/><rect x="7" y="11" width="3" height="1" fill="#505050"/><rect x="5" y="12" width="1" height="1" fill="#505050"/><rect x="6" y="12" width="1" height="1" fill="#d8d8d8"/><rect x="7" y="12" width="1" height="1" fill="#505050"/><rect x="0" y="13" width="6" height="1" fill="#505050"/><rect x="6" y="13" width="1" height="1" fill="#d8d8d8"/><rect x="7" y="13" width="6" height="1" fill="#505050"/><rect x="0" y="14" width="1" height="1" fill="#505050"/><rect x="1" y="14" width="11" height="1" fill="#d8d8d8"/><rect x="12" y="14" width="1" height="1" fill="#505050"/><rect x="0" y="15" width="13" height="1" fill="#505050"/></svg>
<svg width="16" height="16" style="left:150px;top:96px" shape-rendering="crispEdges"><rect x="8" y="0" width="7" height="1" fill="#303030"/><rect x="2" y="1" width="1" height="1" fill="#303030"/><rect x="7" y="1" width="1" height="1" fill="#303030"/><rect x="8" y="1" width="7" height="1" fill="#e4e0b0"/><rect x="15" y="1" width="1" height="1" fill="#303030"/><rect x="3" y="2" width="1" height="1" fill="#303030"/><rect x="7" y="2" width="1" height="1" fill="#303030"/><rect x="8" y="2" width="1" height="1" fill="#fbfbee"/><rect x="9" y="2" width="6" height="1" fill="#e4e0b0"/><rect x="15" y="2" width="1" height="1" fill="#303030"/><rect x="0" y="3" width="5" height="1" fill="#303030"/><rect x="7" y="3" width="1" height="1" fill="#303030"/><rect x="8" y="3" width="3" height="1" fill="#fbfbee"/><rect x="11" y="3" width="4" height="1" fill="#e4e0b0"/><rect x="15" y="3" width="1" height="1" fill="#303030"/><rect x="0" y="4" width="1" height="1" fill="#303030"/><rect x="3" y="4" width="1" height="1" fill="#303030"/><rect x="7" y="4" width="1" height="1" fill="#303030"/><rect x="8" y="4" width="4" height="1" fill="#fbfbee"/><rect x="12" y="4" width="3" height="1" fill="#e4e0b0"/><rect x="15" y="4" width="1" height="1" fill="#303030"/><rect x="0" y="5" width="1" height="1" fill="#303030"/><rect x="2" y="5" width="1" height="1" fill="#303030"/><rect x="7" y="5" width="1" height="1" fill="#303030"/><rect x="8" y="5" width="5" height="1" fill="#fbfbee"/><rect x="13" y="5" width="2" height="1" fill="#e4e0b0"/><rect x="15" y="5" width="1" height="1" fill="#303030"/><rect x="0" y="6" width="1" height="1" fill="#303030"/><rect x="8" y="6" width="7" height="1" fill="#303030"/><rect x="0" y="7" width="1" height="1" fill="#303030"/><rect x="0" y="8" width="1" height="1" fill="#303030"/><rect x="8" y="8" width="7" height="1" fill="#303030"/><rect x="0" y="9" width="1" height="1" fill="#303030"/><rect x="2" y="9" width="1" height="1" fill="#303030"/><rect x="7" y="9" width="1" height="1" fill="#303030"/><rect x="8" y="9" width="7" height="1" fill="#e4e0b0"/><rect x="15" y="9" width="1" height="1" fill="#303030"/><rect x="0" y="10" width="1" height="1" fill="#303030"/><rect x="3" y="10" width="1" height="1" fill="#303030"/><rect x="6" y="10" width="4" height="1" fill="#303030"/><rect x="10" y="10" width="5" height="1" fill="#e4e0b0"/><rect x="15" y="10" width="1" height="1" fill="#303030"/><rect x="0" y="11" width="5" height="1" fill="#303030"/><rect x="6" y="11" width="1" height="1" fill="#303030"/><rect x="7" y="11" width="2" height="1" fill="#e4e0b0"/><rect x="9" y="11" width="1" height="1" fill="#303030"/><rect x="10" y="11" width="1" height="1" fill="#fbfbee"/><rect x="11" y="11" width="1" height="1" fill="#e4e0b0"/><rect x="12" y="11" width="4" height="1" fill="#303030"/><rect x="3" y="12" width="1" height="1" fill="#303030"/><rect x="6" y="12" width="4" height="1" fill="#303030"/><rect x="10" y="12" width="1" height="1" fill="#fbfbee"/><rect x="11" y="12" width="1" height="1" fill="#303030"/><rect x="12" y="12" width="3" height="1" fill="#ffffff"/><rect x="15" y="12" width="1" height="1" fill="#303030"/><rect x="2" y="13" width="1" height="1" fill="#303030"/><rect x="7" y="13" width="1" height="1" fill="#303030"/><rect x="8" y="13" width="3" height="1" fill="#fbfbee"/><rect x="11" y="13" width="1" height="1" fill="#303030"/><rect x="12" y="13" width="1" height="1" fill="#ffffff"/><rect x="13" y="13" width="1" height="1" fill="#303030"/><rect x="14" y="13" width="1" height="1" fill="#ffffff"/><rect x="15" y="13" width="1" height="1" fill="#303030"/><rect x="8" y="14" width="4" height="1" fill="#303030"/><rect x="12" y="14" width="3" height="1" fill="#ffffff"/><rect x="15" y="14" width="1" height="1" fill="#303030"/><rect x="12" y="15" width="3" height="1" fill="#303030"/></svg>
<div class="a" style="left:6px;top:117px;width:167px;height:2px;background:#fdfdfd"></div>
<div class="a" style="left:6px;top:119px;width:167px;height:14px;background:linear-gradient(#efefef 0px,#eeeeee 3px,#dedede 4px,#c8c8c8 9px,#b6b6b6 14px)"></div>
<svg width="14" height="11" style="left:7px;top:120px" shape-rendering="crispEdges"><rect x="0" y="0" width="7" height="1" fill="#4a4a4a"/><rect x="0" y="1" width="1" height="1" fill="#4a4a4a"/><rect x="1" y="1" width="5" height="1" fill="#f8c888"/><rect x="6" y="1" width="8" height="1" fill="#4a4a4a"/><rect x="0" y="2" width="1" height="1" fill="#4a4a4a"/><rect x="1" y="2" width="12" height="1" fill="#f4f080"/><rect x="13" y="2" width="1" height="1" fill="#4a4a4a"/><rect x="0" y="3" width="1" height="1" fill="#4a4a4a"/><rect x="1" y="3" width="12" height="1" fill="#f4f080"/><rect x="13" y="3" width="1" height="1" fill="#4a4a4a"/><rect x="0" y="4" width="1" height="1" fill="#4a4a4a"/><rect x="1" y="4" width="12" height="1" fill="#f4f080"/><rect x="13" y="4" width="1" height="1" fill="#4a4a4a"/><rect x="0" y="5" width="1" height="1" fill="#4a4a4a"/><rect x="1" y="5" width="12" height="1" fill="#f4f080"/><rect x="13" y="5" width="1" height="1" fill="#4a4a4a"/><rect x="0" y="6" width="1" height="1" fill="#4a4a4a"/><rect x="1" y="6" width="12" height="1" fill="#f4f080"/><rect x="13" y="6" width="1" height="1" fill="#4a4a4a"/><rect x="0" y="7" width="1" height="1" fill="#4a4a4a"/><rect x="1" y="7" width="12" height="1" fill="#f8f6b8"/><rect x="13" y="7" width="1" height="1" fill="#4a4a4a"/><rect x="0" y="8" width="1" height="1" fill="#4a4a4a"/><rect x="1" y="8" width="12" height="1" fill="#f8f6b8"/><rect x="13" y="8" width="1" height="1" fill="#4a4a4a"/><rect x="0" y="9" width="1" height="1" fill="#4a4a4a"/><rect x="1" y="9" width="12" height="1" fill="#fffde8"/><rect x="13" y="9" width="1" height="1" fill="#4a4a4a"/><rect x="0" y="10" width="14" height="1" fill="#4a4a4a"/></svg>
<div class="t" style="left:25px;top:119px;letter-spacing:-0.15px">Common</div>
<svg width="15" height="9" style="left:10px;top:139px" shape-rendering="crispEdges"><rect x="0" y="0" width="13" height="1" fill="#404040"/><rect x="0" y="1" width="1" height="1" fill="#404040"/><rect x="1" y="1" width="10" height="1" fill="#f8eeb0"/><rect x="11" y="1" width="3" height="1" fill="#404040"/><rect x="0" y="2" width="1" height="1" fill="#404040"/><rect x="1" y="2" width="1" height="1" fill="#f8eeb0"/><rect x="2" y="2" width="8" height="1" fill="#404040"/><rect x="10" y="2" width="1" height="1" fill="#f8eeb0"/><rect x="11" y="2" width="1" height="1" fill="#404040"/><rect x="12" y="2" width="1" height="1" fill="#f8eeb0"/><rect x="13" y="2" width="2" height="1" fill="#404040"/><rect x="0" y="3" width="1" height="1" fill="#404040"/><rect x="1" y="3" width="10" height="1" fill="#f8eeb0"/><rect x="11" y="3" width="4" height="1" fill="#404040"/><rect x="0" y="4" width="1" height="1" fill="#404040"/><rect x="1" y="4" width="1" height="1" fill="#f8eeb0"/><rect x="2" y="4" width="8" height="1" fill="#404040"/><rect x="10" y="4" width="4" height="1" fill="#f8eeb0"/><rect x="14" y="4" width="1" height="1" fill="#404040"/><rect x="0" y="5" width="1" height="1" fill="#404040"/><rect x="1" y="5" width="13" height="1" fill="#f8eeb0"/><rect x="14" y="5" width="1" height="1" fill="#404040"/><rect x="0" y="6" width="1" height="1" fill="#404040"/><rect x="1" y="6" width="1" height="1" fill="#f8eeb0"/><rect x="2" y="6" width="11" height="1" fill="#404040"/><rect x="13" y="6" width="1" height="1" fill="#f8eeb0"/><rect x="14" y="6" width="1" height="1" fill="#404040"/><rect x="0" y="7" width="1" height="1" fill="#404040"/><rect x="1" y="7" width="13" height="1" fill="#f8eeb0"/><rect x="14" y="7" width="1" height="1" fill="#404040"/><rect x="0" y="8" width="15" height="1" fill="#404040"/></svg>
<div class="t" style="left:28px;top:137px;letter-spacing:-0.016px">Note</div>
<svg width="9" height="6" style="left:162px;top:141px" shape-rendering="crispEdges"><rect x="1" y="0" width="7" height="1" fill="#ffffff"/><rect x="0" y="1" width="1" height="1" fill="#ffffff"/><rect x="1" y="1" width="7" height="1" fill="#000"/><rect x="8" y="1" width="1" height="1" fill="#ffffff"/><rect x="1" y="2" width="1" height="1" fill="#ffffff"/><rect x="2" y="2" width="5" height="1" fill="#000"/><rect x="7" y="2" width="1" height="1" fill="#ffffff"/><rect x="2" y="3" width="1" height="1" fill="#ffffff"/><rect x="3" y="3" width="3" height="1" fill="#000"/><rect x="6" y="3" width="1" height="1" fill="#ffffff"/><rect x="3" y="4" width="1" height="1" fill="#ffffff"/><rect x="4" y="4" width="1" height="1" fill="#000"/><rect x="5" y="4" width="1" height="1" fill="#ffffff"/><rect x="4" y="5" width="1" height="1" fill="#ffffff"/></svg>
<svg width="15" height="7" style="left:10px;top:159px" shape-rendering="crispEdges"><rect x="5" y="0" width="1" height="1" fill="#505050"/><rect x="5" y="1" width="1" height="1" fill="#505050"/><rect x="1" y="2" width="3" height="1" fill="#505050"/><rect x="5" y="2" width="4" height="1" fill="#505050"/><rect x="12" y="2" width="3" height="1" fill="#505050"/><rect x="4" y="3" width="2" height="1" fill="#505050"/><rect x="9" y="3" width="1" height="1" fill="#505050"/><rect x="11" y="3" width="1" height="1" fill="#505050"/><rect x="1" y="4" width="5" height="1" fill="#505050"/><rect x="9" y="4" width="1" height="1" fill="#505050"/><rect x="11" y="4" width="1" height="1" fill="#505050"/><rect x="0" y="5" width="1" height="1" fill="#505050"/><rect x="4" y="5" width="2" height="1" fill="#505050"/><rect x="9" y="5" width="1" height="1" fill="#505050"/><rect x="11" y="5" width="1" height="1" fill="#505050"/><rect x="1" y="6" width="8" height="1" fill="#505050"/><rect x="12" y="6" width="3" height="1" fill="#505050"/></svg>
<div class="t" style="left:28px;top:157px;letter-spacing:0.164px">Text Box</div>
<svg width="9" height="6" style="left:162px;top:161px" shape-rendering="crispEdges"><rect x="1" y="0" width="7" height="1" fill="#ffffff"/><rect x="0" y="1" width="1" height="1" fill="#ffffff"/><rect x="1" y="1" width="7" height="1" fill="#000"/><rect x="8" y="1" width="1" height="1" fill="#ffffff"/><rect x="1" y="2" width="1" height="1" fill="#ffffff"/><rect x="2" y="2" width="5" height="1" fill="#000"/><rect x="7" y="2" width="1" height="1" fill="#ffffff"/><rect x="2" y="3" width="1" height="1" fill="#ffffff"/><rect x="3" y="3" width="3" height="1" fill="#000"/><rect x="6" y="3" width="1" height="1" fill="#ffffff"/><rect x="3" y="4" width="1" height="1" fill="#ffffff"/><rect x="4" y="4" width="1" height="1" fill="#000"/><rect x="5" y="4" width="1" height="1" fill="#ffffff"/><rect x="4" y="5" width="1" height="1" fill="#ffffff"/></svg>
<svg width="14" height="13" style="left:10px;top:177px" shape-rendering="crispEdges"><rect x="5" y="0" width="9" height="1" fill="#404040"/><rect x="5" y="1" width="1" height="1" fill="#404040"/><rect x="6" y="1" width="7" height="1" fill="#f8eeb0"/><rect x="13" y="1" width="1" height="1" fill="#404040"/><rect x="5" y="2" width="1" height="1" fill="#404040"/><rect x="6" y="2" width="1" height="1" fill="#f8eeb0"/><rect x="7" y="2" width="5" height="1" fill="#404040"/><rect x="12" y="2" width="1" height="1" fill="#f8eeb0"/><rect x="13" y="2" width="1" height="1" fill="#404040"/><rect x="5" y="3" width="1" height="1" fill="#404040"/><rect x="6" y="3" width="7" height="1" fill="#f8eeb0"/><rect x="13" y="3" width="1" height="1" fill="#404040"/><rect x="5" y="4" width="1" height="1" fill="#404040"/><rect x="6" y="4" width="1" height="1" fill="#f8eeb0"/><rect x="7" y="4" width="5" height="1" fill="#404040"/><rect x="12" y="4" width="1" height="1" fill="#f8eeb0"/><rect x="13" y="4" width="1" height="1" fill="#404040"/><rect x="5" y="5" width="1" height="1" fill="#404040"/><rect x="6" y="5" width="7" height="1" fill="#f8eeb0"/><rect x="13" y="5" width="1" height="1" fill="#404040"/><rect x="5" y="6" width="1" height="1" fill="#404040"/><rect x="6" y="6" width="7" height="1" fill="#f8eeb0"/><rect x="13" y="6" width="1" height="1" fill="#404040"/><rect x="5" y="7" width="9" height="1" fill="#404040"/><rect x="4" y="8" width="1" height="1" fill="#404040"/><rect x="3" y="9" width="1" height="1" fill="#404040"/><rect x="1" y="11" width="1" height="1" fill="#404040"/><rect x="0" y="12" width="1" height="1" fill="#404040"/></svg>
<div class="t" style="left:28px;top:177px;letter-spacing:-0.27px">Anchor</div>
<svg width="9" height="6" style="left:162px;top:181px" shape-rendering="crispEdges"><rect x="1" y="0" width="7" height="1" fill="#ffffff"/><rect x="0" y="1" width="1" height="1" fill="#ffffff"/><rect x="1" y="1" width="7" height="1" fill="#000"/><rect x="8" y="1" width="1" height="1" fill="#ffffff"/><rect x="1" y="2" width="1" height="1" fill="#ffffff"/><rect x="2" y="2" width="5" height="1" fill="#000"/><rect x="7" y="2" width="1" height="1" fill="#ffffff"/><rect x="2" y="3" width="1" height="1" fill="#ffffff"/><rect x="3" y="3" width="3" height="1" fill="#000"/><rect x="6" y="3" width="1" height="1" fill="#ffffff"/><rect x="3" y="4" width="1" height="1" fill="#ffffff"/><rect x="4" y="4" width="1" height="1" fill="#000"/><rect x="5" y="4" width="1" height="1" fill="#ffffff"/><rect x="4" y="5" width="1" height="1" fill="#ffffff"/></svg>
<svg width="14" height="13" style="left:10px;top:197px" shape-rendering="crispEdges"><rect x="7" y="0" width="7" height="1" fill="#4a78e8"/><rect x="11" y="1" width="3" height="1" fill="#4a78e8"/><rect x="10" y="2" width="2" height="1" fill="#4a78e8"/><rect x="13" y="2" width="1" height="1" fill="#4a78e8"/><rect x="9" y="3" width="1" height="1" fill="#4a78e8"/><rect x="10" y="3" width="1" height="1" fill="#303050"/><rect x="13" y="3" width="1" height="1" fill="#4a78e8"/><rect x="8" y="4" width="1" height="1" fill="#4a78e8"/><rect x="9" y="4" width="1" height="1" fill="#303050"/><rect x="13" y="4" width="1" height="1" fill="#4a78e8"/><rect x="13" y="5" width="1" height="1" fill="#4a78e8"/><rect x="6" y="6" width="1" height="1" fill="#4a78e8"/><rect x="7" y="6" width="1" height="1" fill="#303050"/><rect x="5" y="7" width="1" height="1" fill="#4a78e8"/><rect x="6" y="7" width="1" height="1" fill="#303050"/><rect x="4" y="8" width="1" height="1" fill="#4a78e8"/><rect x="5" y="8" width="1" height="1" fill="#303050"/><rect x="2" y="10" width="1" height="1" fill="#4a78e8"/><rect x="3" y="10" width="1" height="1" fill="#303050"/><rect x="1" y="11" width="1" height="1" fill="#4a78e8"/><rect x="2" y="11" width="1" height="1" fill="#303050"/><rect x="0" y="12" width="1" height="1" fill="#4a78e8"/><rect x="1" y="12" width="1" height="1" fill="#303050"/></svg>
<div class="t" style="left:28px;top:197px;letter-spacing:-0.172px">Dependency</div>
<svg width="14" height="12" style="left:10px;top:217px" shape-rendering="crispEdges"><rect x="0" y="0" width="14" height="1" fill="#303030"/><rect x="0" y="1" width="1" height="1" fill="#303030"/><rect x="1" y="1" width="4" height="1" fill="#2850d8"/><rect x="5" y="1" width="5" height="1" fill="#f0f8ff"/><rect x="10" y="1" width="3" height="1" fill="#2850d8"/><rect x="13" y="1" width="1" height="1" fill="#303030"/><rect x="0" y="2" width="1" height="1" fill="#303030"/><rect x="1" y="2" width="2" height="1" fill="#f0f8ff"/><rect x="3" y="2" width="1" height="1" fill="#2850d8"/><rect x="4" y="2" width="7" height="1" fill="#f0f8ff"/><rect x="11" y="2" width="1" height="1" fill="#2850d8"/><rect x="12" y="2" width="1" height="1" fill="#f0f8ff"/><rect x="13" y="2" width="1" height="1" fill="#303030"/><rect x="0" y="3" width="1" height="1" fill="#303030"/><rect x="1" y="3" width="3" height="1" fill="#f0f8ff"/><rect x="4" y="3" width="2" height="1" fill="#a8ccec"/><rect x="6" y="3" width="3" height="1" fill="#f0f8ff"/><rect x="9" y="3" width="3" height="1" fill="#a8ccec"/><rect x="12" y="3" width="1" height="1" fill="#f0f8ff"/><rect x="13" y="3" width="1" height="1" fill="#303030"/><rect x="0" y="4" width="1" height="1" fill="#303030"/><rect x="1" y="4" width="3" height="1" fill="#a8ccec"/><rect x="4" y="4" width="1" height="1" fill="#3a98a8"/><rect x="5" y="4" width="2" height="1" fill="#a8ccec"/><rect x="7" y="4" width="5" height="1" fill="#3a98a8"/><rect x="12" y="4" width="1" height="1" fill="#a8ccec"/><rect x="13" y="4" width="1" height="1" fill="#303030"/><rect x="0" y="5" width="1" height="1" fill="#303030"/><rect x="1" y="5" width="3" height="1" fill="#3a98a8"/><rect x="4" y="5" width="2" height="1" fill="#a8ccec"/><rect x="6" y="5" width="6" height="1" fill="#3a98a8"/><rect x="12" y="5" width="1" height="1" fill="#a8ccec"/><rect x="13" y="5" width="1" height="1" fill="#303030"/><rect x="0" y="6" width="1" height="1" fill="#303030"/><rect x="1" y="6" width="2" height="1" fill="#0c3c3c"/><rect x="3" y="6" width="2" height="1" fill="#3a98a8"/><rect x="5" y="6" width="2" height="1" fill="#a8ccec"/><rect x="7" y="6" width="2" height="1" fill="#3a98a8"/><rect x="9" y="6" width="4" height="1" fill="#a8ccec"/><rect x="13" y="6" width="1" height="1" fill="#303030"/><rect x="0" y="7" width="1" height="1" fill="#303030"/><rect x="1" y="7" width="7" height="1" fill="#0c3c3c"/><rect x="8" y="7" width="1" height="1" fill="#3a98a8"/><rect x="9" y="7" width="4" height="1" fill="#a8ccec"/><rect x="13" y="7" width="1" height="1" fill="#303030"/><rect x="0" y="8" width="1" height="1" fill="#303030"/><rect x="1" y="8" width="9" height="1" fill="#0c3c3c"/><rect x="10" y="8" width="1" height="1" fill="#3a98a8"/><rect x="11" y="8" width="2" height="1" fill="#a8ccec"/><rect x="13" y="8" width="1" height="1" fill="#303030"/><rect x="0" y="9" width="1" height="1" fill="#303030"/><rect x="1" y="9" width="1" height="1" fill="#a8ccec"/><rect x="2" y="9" width="2" height="1" fill="#3a98a8"/><rect x="4" y="9" width="1" height="1" fill="#0c3c3c"/><rect x="5" y="9" width="6" height="1" fill="#3a98a8"/><rect x="11" y="9" width="1" height="1" fill="#6050c0"/><rect x="12" y="9" width="1" height="1" fill="#a8ccec"/><rect x="13" y="9" width="1" height="1" fill="#303030"/><rect x="0" y="10" width="1" height="1" fill="#303030"/><rect x="1" y="10" width="4" height="1" fill="#a8ccec"/><rect x="5" y="10" width="1" height="1" fill="#3a98a8"/><rect x="6" y="10" width="7" height="1" fill="#a8ccec"/><rect x="13" y="10" width="1" height="1" fill="#303030"/><rect x="0" y="11" width="14" height="1" fill="#303030"/></svg>
<div class="t" style="left:28px;top:217px;letter-spacing:-0.27px">Image Shape</div>
<svg width="16" height="16" style="left:9px;top:235px" shape-rendering="crispEdges"><rect x="4" y="0" width="8" height="1" fill="#404040"/><rect x="2" y="1" width="2" height="1" fill="#404040"/><rect x="4" y="1" width="2" height="1" fill="#f8f8f8"/><rect x="6" y="1" width="5" height="1" fill="#1850e8"/><rect x="11" y="1" width="1" height="1" fill="#f8f8f8"/><rect x="12" y="1" width="3" height="1" fill="#404040"/><rect x="1" y="2" width="1" height="1" fill="#404040"/><rect x="2" y="2" width="3" height="1" fill="#f8f8f8"/><rect x="5" y="2" width="3" height="1" fill="#1850e8"/><rect x="8" y="2" width="1" height="1" fill="#202020"/><rect x="9" y="2" width="1" height="1" fill="#f8f8f8"/><rect x="10" y="2" width="2" height="1" fill="#1850e8"/><rect x="12" y="2" width="2" height="1" fill="#f8f8f8"/><rect x="14" y="2" width="2" height="1" fill="#404040"/><rect x="0" y="3" width="1" height="1" fill="#404040"/><rect x="1" y="3" width="4" height="1" fill="#f8f8f8"/><rect x="5" y="3" width="3" height="1" fill="#1850e8"/><rect x="8" y="3" width="1" height="1" fill="#202020"/><rect x="9" y="3" width="3" height="1" fill="#1850e8"/><rect x="12" y="3" width="3" height="1" fill="#f8f8f8"/><rect x="15" y="3" width="1" height="1" fill="#404040"/><rect x="1" y="4" width="2" height="1" fill="#404040"/><rect x="3" y="4" width="2" height="1" fill="#f8f8f8"/><rect x="5" y="4" width="3" height="1" fill="#1850e8"/><rect x="8" y="4" width="1" height="1" fill="#202020"/><rect x="9" y="4" width="3" height="1" fill="#1850e8"/><rect x="12" y="4" width="1" height="1" fill="#f8f8f8"/><rect x="13" y="4" width="2" height="1" fill="#404040"/><rect x="3" y="5" width="3" height="1" fill="#404040"/><rect x="6" y="5" width="5" height="1" fill="#1850e8"/><rect x="11" y="5" width="3" height="1" fill="#404040"/><rect x="3" y="6" width="2" height="1" fill="#808080"/><rect x="5" y="6" width="7" height="1" fill="#404040"/><rect x="12" y="6" width="2" height="1" fill="#808080"/><rect x="3" y="7" width="1" height="1" fill="#808080"/><rect x="13" y="7" width="2" height="1" fill="#808080"/><rect x="3" y="8" width="1" height="1" fill="#808080"/><rect x="5" y="8" width="4" height="1" fill="#404040"/><rect x="14" y="8" width="1" height="1" fill="#808080"/><rect x="3" y="9" width="1" height="1" fill="#808080"/><rect x="5" y="9" width="1" height="1" fill="#404040"/><rect x="6" y="9" width="2" height="1" fill="#d0d8f0"/><rect x="8" y="9" width="4" height="1" fill="#404040"/><rect x="14" y="9" width="1" height="1" fill="#808080"/><rect x="3" y="10" width="1" height="1" fill="#808080"/><rect x="5" y="10" width="4" height="1" fill="#404040"/><rect x="11" y="10" width="1" height="1" fill="#404040"/><rect x="14" y="10" width="1" height="1" fill="#808080"/><rect x="3" y="11" width="1" height="1" fill="#808080"/><rect x="10" y="11" width="4" height="1" fill="#404040"/><rect x="14" y="11" width="1" height="1" fill="#808080"/><rect x="3" y="12" width="1" height="1" fill="#808080"/><rect x="10" y="12" width="1" height="1" fill="#404040"/><rect x="11" y="12" width="2" height="1" fill="#d0d8f0"/><rect x="13" y="12" width="1" height="1" fill="#404040"/><rect x="14" y="12" width="1" height="1" fill="#808080"/><rect x="3" y="13" width="1" height="1" fill="#808080"/><rect x="10" y="13" width="4" height="1" fill="#404040"/><rect x="14" y="13" width="1" height="1" fill="#808080"/><rect x="3" y="14" width="1" height="1" fill="#808080"/><rect x="14" y="14" width="1" height="1" fill="#808080"/><rect x="3" y="15" width="12" height="1" fill="#808080"/></svg>
<div class="t" style="left:28px;top:237px;letter-spacing:-0.164px">Diagram Overview</div>
<svg width="14" height="14" style="left:10px;top:256px" shape-rendering="crispEdges"><rect x="0" y="0" width="14" height="1" fill="#888888"/><rect x="0" y="1" width="1" height="1" fill="#888888"/><rect x="1" y="1" width="12" height="1" fill="#ffffff"/><rect x="13" y="1" width="1" height="1" fill="#888888"/><rect x="0" y="2" width="1" height="1" fill="#888888"/><rect x="1" y="2" width="1" height="1" fill="#ffffff"/><rect x="2" y="2" width="3" height="1" fill="#c00000"/><rect x="5" y="2" width="8" height="1" fill="#ffffff"/><rect x="13" y="2" width="1" height="1" fill="#888888"/><rect x="0" y="3" width="1" height="1" fill="#888888"/><rect x="1" y="3" width="1" height="1" fill="#ffffff"/><rect x="2" y="3" width="3" height="1" fill="#c00000"/><rect x="5" y="3" width="1" height="1" fill="#ffffff"/><rect x="6" y="3" width="6" height="1" fill="#000000"/><rect x="12" y="3" width="1" height="1" fill="#ffffff"/><rect x="13" y="3" width="1" height="1" fill="#888888"/><rect x="0" y="4" width="1" height="1" fill="#888888"/><rect x="1" y="4" width="1" height="1" fill="#ffffff"/><rect x="2" y="4" width="3" height="1" fill="#c00000"/><rect x="5" y="4" width="8" height="1" fill="#ffffff"/><rect x="13" y="4" width="1" height="1" fill="#888888"/><rect x="0" y="5" width="1" height="1" fill="#888888"/><rect x="1" y="5" width="12" height="1" fill="#ffffff"/><rect x="13" y="5" width="1" height="1" fill="#888888"/><rect x="0" y="6" width="1" height="1" fill="#888888"/><rect x="1" y="6" width="1" height="1" fill="#ffffff"/><rect x="2" y="6" width="3" height="1" fill="#ffb000"/><rect x="5" y="6" width="8" height="1" fill="#ffffff"/><rect x="13" y="6" width="1" height="1" fill="#888888"/><rect x="0" y="7" width="1" height="1" fill="#888888"/><rect x="1" y="7" width="1" height="1" fill="#ffffff"/><rect x="2" y="7" width="3" height="1" fill="#ffb000"/><rect x="5" y="7" width="1" height="1" fill="#ffffff"/><rect x="6" y="7" width="6" height="1" fill="#000000"/><rect x="12" y="7" width="1" height="1" fill="#ffffff"/><rect x="13" y="7" width="1" height="1" fill="#888888"/><rect x="0" y="8" width="1" height="1" fill="#888888"/><rect x="1" y="8" width="1" height="1" fill="#ffffff"/><rect x="2" y="8" width="3" height="1" fill="#ffb000"/><rect x="5" y="8" width="8" height="1" fill="#ffffff"/><rect x="13" y="8" width="1" height="1" fill="#888888"/><rect x="0" y="9" width="1" height="1" fill="#888888"/><rect x="1" y="9" width="12" height="1" fill="#ffffff"/><rect x="13" y="9" width="1" height="1" fill="#888888"/><rect x="0" y="10" width="1" height="1" fill="#888888"/><rect x="1" y="10" width="1" height="1" fill="#ffffff"/><rect x="2" y="10" width="3" height="1" fill="#109080"/><rect x="5" y="10" width="8" height="1" fill="#ffffff"/><rect x="13" y="10" width="1" height="1" fill="#888888"/><rect x="0" y="11" width="1" height="1" fill="#888888"/><rect x="1" y="11" width="1" height="1" fill="#ffffff"/><rect x="2" y="11" width="3" height="1" fill="#109080"/><rect x="5" y="11" width="1" height="1" fill="#ffffff"/><rect x="6" y="11" width="6" height="1" fill="#000000"/><rect x="12" y="11" width="1" height="1" fill="#ffffff"/><rect x="13" y="11" width="1" height="1" fill="#888888"/><rect x="0" y="12" width="1" height="1" fill="#888888"/><rect x="1" y="12" width="1" height="1" fill="#ffffff"/><rect x="2" y="12" width="3" height="1" fill="#109080"/><rect x="5" y="12" width="8" height="1" fill="#ffffff"/><rect x="13" y="12" width="1" height="1" fill="#888888"/><rect x="0" y="13" width="14" height="1" fill="#888888"/></svg>
<div class="t" style="left:28px;top:257px;letter-spacing:-0.304px">Diagram Legend</div>
<svg width="16" height="3" style="left:10px;top:282px" shape-rendering="crispEdges"><path d="M0 0.5H3M4 0.5H7M8 0.5H11M12 0.5H15" stroke="#404040"/></svg>
<div class="t" style="left:28px;top:277px;letter-spacing:-0.108px">Horizontal Separator</div>
<svg width="9" height="6" style="left:162px;top:281px" shape-rendering="crispEdges"><rect x="1" y="0" width="7" height="1" fill="#ffffff"/><rect x="0" y="1" width="1" height="1" fill="#ffffff"/><rect x="1" y="1" width="7" height="1" fill="#000"/><rect x="8" y="1" width="1" height="1" fill="#ffffff"/><rect x="1" y="2" width="1" height="1" fill="#ffffff"/><rect x="2" y="2" width="5" height="1" fill="#000"/><rect x="7" y="2" width="1" height="1" fill="#ffffff"/><rect x="2" y="3" width="1" height="1" fill="#ffffff"/><rect x="3" y="3" width="3" height="1" fill="#000"/><rect x="6" y="3" width="1" height="1" fill="#ffffff"/><rect x="3" y="4" width="1" height="1" fill="#ffffff"/><rect x="4" y="4" width="1" height="1" fill="#000"/><rect x="5" y="4" width="1" height="1" fill="#ffffff"/><rect x="4" y="5" width="1" height="1" fill="#ffffff"/></svg>
<div class="a" style="left:6px;top:296px;width:167px;height:2px;background:#fdfdfd"></div>
<div class="a" style="left:6px;top:298px;width:167px;height:14px;background:linear-gradient(#efefef 0px,#eeeeee 3px,#dedede 4px,#c8c8c8 9px,#b6b6b6 14px)"></div>
<svg width="16" height="16" style="left:6px;top:297px" shape-rendering="crispEdges"><rect x="0" y="0" width="13" height="1" fill="#787878"/><rect x="0" y="1" width="1" height="1" fill="#787878"/><rect x="1" y="1" width="10" height="1" fill="#e0e0e0"/><rect x="11" y="1" width="1" height="1" fill="#787878"/><rect x="12" y="1" width="1" height="1" fill="#ffffff"/><rect x="13" y="1" width="1" height="1" fill="#787878"/><rect x="0" y="2" width="1" height="1" fill="#787878"/><rect x="1" y="2" width="7" height="1" fill="#e0e0e0"/><rect x="8" y="2" width="3" height="1" fill="#333333"/><rect x="11" y="2" width="1" height="1" fill="#787878"/><rect x="12" y="2" width="2" height="1" fill="#ffffff"/><rect x="14" y="2" width="1" height="1" fill="#787878"/><rect x="0" y="3" width="1" height="1" fill="#787878"/><rect x="1" y="3" width="1" height="1" fill="#e0e0e0"/><rect x="2" y="3" width="3" height="1" fill="#333333"/><rect x="5" y="3" width="2" height="1" fill="#e0e0e0"/><rect x="7" y="3" width="1" height="1" fill="#333333"/><rect x="8" y="3" width="3" height="1" fill="#d4e0f4"/><rect x="11" y="3" width="1" height="1" fill="#787878"/><rect x="12" y="3" width="3" height="1" fill="#ffffff"/><rect x="15" y="3" width="1" height="1" fill="#787878"/><rect x="0" y="4" width="1" height="1" fill="#787878"/><rect x="1" y="4" width="1" height="1" fill="#e0e0e0"/><rect x="2" y="4" width="6" height="1" fill="#333333"/><rect x="8" y="4" width="3" height="1" fill="#d4e0f4"/><rect x="11" y="4" width="5" height="1" fill="#787878"/><rect x="0" y="5" width="1" height="1" fill="#787878"/><rect x="1" y="5" width="1" height="1" fill="#e0e0e0"/><rect x="2" y="5" width="3" height="1" fill="#333333"/><rect x="5" y="5" width="2" height="1" fill="#e0e0e0"/><rect x="7" y="5" width="1" height="1" fill="#333333"/><rect x="8" y="5" width="5" height="1" fill="#d4e0f4"/><rect x="13" y="5" width="1" height="1" fill="#333333"/><rect x="14" y="5" width="1" height="1" fill="#e0e0e0"/><rect x="15" y="5" width="1" height="1" fill="#787878"/><rect x="0" y="6" width="1" height="1" fill="#787878"/><rect x="1" y="6" width="7" height="1" fill="#e0e0e0"/><rect x="8" y="6" width="5" height="1" fill="#333333"/><rect x="13" y="6" width="2" height="1" fill="#e0e0e0"/><rect x="15" y="6" width="1" height="1" fill="#787878"/><rect x="0" y="7" width="1" height="1" fill="#787878"/><rect x="1" y="7" width="9" height="1" fill="#e0e0e0"/><rect x="10" y="7" width="1" height="1" fill="#333333"/><rect x="11" y="7" width="4" height="1" fill="#e0e0e0"/><rect x="15" y="7" width="1" height="1" fill="#787878"/><rect x="0" y="8" width="1" height="1" fill="#787878"/><rect x="1" y="8" width="9" height="1" fill="#e0e0e0"/><rect x="10" y="8" width="1" height="1" fill="#333333"/><rect x="11" y="8" width="4" height="1" fill="#e0e0e0"/><rect x="15" y="8" width="1" height="1" fill="#787878"/><rect x="0" y="9" width="1" height="1" fill="#787878"/><rect x="1" y="9" width="9" height="1" fill="#e0e0e0"/><rect x="10" y="9" width="1" height="1" fill="#333333"/><rect x="11" y="9" width="4" height="1" fill="#e0e0e0"/><rect x="15" y="9" width="1" height="1" fill="#787878"/><rect x="0" y="10" width="1" height="1" fill="#787878"/><rect x="1" y="10" width="8" height="1" fill="#e0e0e0"/><rect x="9" y="10" width="3" height="1" fill="#333333"/><rect x="12" y="10" width="3" height="1" fill="#e0e0e0"/><rect x="15" y="10" width="1" height="1" fill="#787878"/><rect x="0" y="11" width="1" height="1" fill="#787878"/><rect x="1" y="11" width="9" height="1" fill="#e0e0e0"/><rect x="10" y="11" width="1" height="1" fill="#333333"/><rect x="11" y="11" width="4" height="1" fill="#e0e0e0"/><rect x="15" y="11" width="1" height="1" fill="#787878"/><rect x="0" y="12" width="1" height="1" fill="#787878"/><rect x="1" y="12" width="2" height="1" fill="#e0e0e0"/><rect x="3" y="12" width="10" height="1" fill="#333333"/><rect x="13" y="12" width="2" height="1" fill="#e0e0e0"/><rect x="15" y="12" width="1" height="1" fill="#787878"/><rect x="0" y="13" width="1" height="1" fill="#787878"/><rect x="1" y="13" width="2" height="1" fill="#e0e0e0"/><rect x="3" y="13" width="10" height="1" fill="#333333"/><rect x="13" y="13" width="2" height="1" fill="#e0e0e0"/><rect x="15" y="13" width="1" height="1" fill="#787878"/><rect x="0" y="14" width="1" height="1" fill="#787878"/><rect x="1" y="14" width="14" height="1" fill="#e0e0e0"/><rect x="15" y="14" width="1" height="1" fill="#787878"/><rect x="0" y="15" width="16" height="1" fill="#787878"/></svg>
<div class="t" style="left:25px;top:298px;letter-spacing:-0.02px">Activity Diagram</div>
<svg width="15" height="11" style="left:10px;top:317px" shape-rendering="crispEdges"><rect x="3" y="0" width="9" height="1" fill="#404040"/><rect x="2" y="1" width="1" height="1" fill="#404040"/><rect x="3" y="1" width="9" height="1" fill="#fafae8"/><rect x="12" y="1" width="1" height="1" fill="#404040"/><rect x="1" y="2" width="1" height="1" fill="#404040"/><rect x="2" y="2" width="9" height="1" fill="#fafae8"/><rect x="11" y="2" width="2" height="1" fill="#eceacc"/><rect x="13" y="2" width="1" height="1" fill="#404040"/><rect x="0" y="3" width="1" height="1" fill="#404040"/><rect x="1" y="3" width="9" height="1" fill="#fafae8"/><rect x="10" y="3" width="4" height="1" fill="#eceacc"/><rect x="14" y="3" width="1" height="1" fill="#404040"/><rect x="0" y="4" width="1" height="1" fill="#404040"/><rect x="1" y="4" width="8" height="1" fill="#fafae8"/><rect x="9" y="4" width="5" height="1" fill="#eceacc"/><rect x="14" y="4" width="1" height="1" fill="#404040"/><rect x="0" y="5" width="1" height="1" fill="#404040"/><rect x="1" y="5" width="7" height="1" fill="#fafae8"/><rect x="8" y="5" width="6" height="1" fill="#eceacc"/><rect x="14" y="5" width="1" height="1" fill="#404040"/><rect x="0" y="6" width="1" height="1" fill="#404040"/><rect x="1" y="6" width="6" height="1" fill="#fafae8"/><rect x="7" y="6" width="7" height="1" fill="#eceacc"/><rect x="14" y="6" width="1" height="1" fill="#404040"/><rect x="0" y="7" width="1" height="1" fill="#404040"/><rect x="1" y="7" width="5" height="1" fill="#fafae8"/><rect x="6" y="7" width="7" height="1" fill="#eceacc"/><rect x="13" y="7" width="1" height="1" fill="#d8d4a8"/><rect x="14" y="7" width="1" height="1" fill="#404040"/><rect x="1" y="8" width="1" height="1" fill="#404040"/><rect x="2" y="8" width="3" height="1" fill="#fafae8"/><rect x="5" y="8" width="6" height="1" fill="#eceacc"/><rect x="11" y="8" width="2" height="1" fill="#d8d4a8"/><rect x="13" y="8" width="1" height="1" fill="#404040"/><rect x="2" y="9" width="1" height="1" fill="#404040"/><rect x="3" y="9" width="7" height="1" fill="#eceacc"/><rect x="10" y="9" width="2" height="1" fill="#d8d4a8"/><rect x="12" y="9" width="1" height="1" fill="#404040"/><rect x="3" y="10" width="9" height="1" fill="#404040"/></svg>
<div class="t" style="left:28px;top:316px;letter-spacing:-0.07px">Action</div>
<svg width="9" height="6" style="left:162px;top:320px" shape-rendering="crispEdges"><rect x="1" y="0" width="7" height="1" fill="#ffffff"/><rect x="0" y="1" width="1" height="1" fill="#ffffff"/><rect x="1" y="1" width="7" height="1" fill="#000"/><rect x="8" y="1" width="1" height="1" fill="#ffffff"/><rect x="1" y="2" width="1" height="1" fill="#ffffff"/><rect x="2" y="2" width="5" height="1" fill="#000"/><rect x="7" y="2" width="1" height="1" fill="#ffffff"/><rect x="2" y="3" width="1" height="1" fill="#ffffff"/><rect x="3" y="3" width="3" height="1" fill="#000"/><rect x="6" y="3" width="1" height="1" fill="#ffffff"/><rect x="3" y="4" width="1" height="1" fill="#ffffff"/><rect x="4" y="4" width="1" height="1" fill="#000"/><rect x="5" y="4" width="1" height="1" fill="#ffffff"/><rect x="4" y="5" width="1" height="1" fill="#ffffff"/></svg>
<svg width="15" height="10" style="left:10px;top:337px" shape-rendering="crispEdges"><rect x="0" y="0" width="15" height="1" fill="#404040"/><rect x="0" y="1" width="1" height="1" fill="#404040"/><rect x="1" y="1" width="11" height="1" fill="#fafae8"/><rect x="12" y="1" width="2" height="1" fill="#eceacc"/><rect x="14" y="1" width="1" height="1" fill="#404040"/><rect x="0" y="2" width="1" height="1" fill="#404040"/><rect x="1" y="2" width="10" height="1" fill="#fafae8"/><rect x="11" y="2" width="3" height="1" fill="#eceacc"/><rect x="14" y="2" width="1" height="1" fill="#404040"/><rect x="0" y="3" width="1" height="1" fill="#404040"/><rect x="1" y="3" width="9" height="1" fill="#fafae8"/><rect x="10" y="3" width="4" height="1" fill="#eceacc"/><rect x="14" y="3" width="1" height="1" fill="#404040"/><rect x="0" y="4" width="1" height="1" fill="#404040"/><rect x="1" y="4" width="8" height="1" fill="#fafae8"/><rect x="9" y="4" width="4" height="1" fill="#eceacc"/><rect x="13" y="4" width="1" height="1" fill="#d8d4a8"/><rect x="14" y="4" width="1" height="1" fill="#404040"/><rect x="0" y="5" width="1" height="1" fill="#404040"/><rect x="1" y="5" width="7" height="1" fill="#fafae8"/><rect x="8" y="5" width="5" height="1" fill="#eceacc"/><rect x="13" y="5" width="1" height="1" fill="#d8d4a8"/><rect x="14" y="5" width="1" height="1" fill="#404040"/><rect x="0" y="6" width="1" height="1" fill="#404040"/><rect x="1" y="6" width="6" height="1" fill="#fafae8"/><rect x="7" y="6" width="6" height="1" fill="#eceacc"/><rect x="13" y="6" width="1" height="1" fill="#d8d4a8"/><rect x="14" y="6" width="1" height="1" fill="#404040"/><rect x="0" y="7" width="1" height="1" fill="#404040"/><rect x="1" y="7" width="5" height="1" fill="#fafae8"/><rect x="6" y="7" width="6" height="1" fill="#eceacc"/><rect x="12" y="7" width="2" height="1" fill="#d8d4a8"/><rect x="14" y="7" width="1" height="1" fill="#404040"/><rect x="0" y="8" width="1" height="1" fill="#404040"/><rect x="1" y="8" width="1" height="1" fill="#fafae8"/><rect x="2" y="8" width="9" height="1" fill="#eceacc"/><rect x="11" y="8" width="3" height="1" fill="#d8d4a8"/><rect x="14" y="8" width="1" height="1" fill="#404040"/><rect x="0" y="9" width="15" height="1" fill="#404040"/></svg>
<div class="t" style="left:28px;top:336px;letter-spacing:-0.07px">Object Node</div>
<svg width="9" height="6" style="left:162px;top:340px" shape-rendering="crispEdges"><rect x="1" y="0" width="7" height="1" fill="#ffffff"/><rect x="0" y="1" width="1" height="1" fill="#ffffff"/><rect x="1" y="1" width="7" height="1" fill="#000"/><rect x="8" y="1" width="1" height="1" fill="#ffffff"/><rect x="1" y="2" width="1" height="1" fill="#ffffff"/><rect x="2" y="2" width="5" height="1" fill="#000"/><rect x="7" y="2" width="1" height="1" fill="#ffffff"/><rect x="2" y="3" width="1" height="1" fill="#ffffff"/><rect x="3" y="3" width="3" height="1" fill="#000"/><rect x="6" y="3" width="1" height="1" fill="#ffffff"/><rect x="3" y="4" width="1" height="1" fill="#ffffff"/><rect x="4" y="4" width="1" height="1" fill="#000"/><rect x="5" y="4" width="1" height="1" fill="#ffffff"/><rect x="4" y="5" width="1" height="1" fill="#ffffff"/></svg>
<svg width="14" height="13" style="left:10px;top:356px" shape-rendering="crispEdges"><rect x="0" y="0" width="11" height="1" fill="#4a78e8"/><rect x="11" y="0" width="1" height="1" fill="#303050"/><rect x="0" y="1" width="10" height="1" fill="#303050"/><rect x="10" y="1" width="1" height="1" fill="#4a78e8"/><rect x="11" y="1" width="1" height="1" fill="#303050"/><rect x="10" y="2" width="1" height="1" fill="#4a78e8"/><rect x="11" y="2" width="1" height="1" fill="#303050"/><rect x="10" y="3" width="1" height="1" fill="#4a78e8"/><rect x="11" y="3" width="1" height="1" fill="#303050"/><rect x="10" y="4" width="1" height="1" fill="#4a78e8"/><rect x="11" y="4" width="1" height="1" fill="#303050"/><rect x="8" y="5" width="1" height="1" fill="#4a78e8"/><rect x="9" y="5" width="1" height="1" fill="#303050"/><rect x="11" y="5" width="1" height="1" fill="#4a78e8"/><rect x="12" y="5" width="1" height="1" fill="#303050"/><rect x="9" y="6" width="2" height="1" fill="#4a78e8"/><rect x="11" y="6" width="1" height="1" fill="#303050"/><rect x="10" y="7" width="1" height="1" fill="#4a78e8"/><rect x="10" y="8" width="1" height="1" fill="#303050"/><rect x="7" y="9" width="7" height="1" fill="#404040"/><rect x="7" y="10" width="1" height="1" fill="#404040"/><rect x="8" y="10" width="2" height="1" fill="#fafae8"/><rect x="10" y="10" width="2" height="1" fill="#eceacc"/><rect x="12" y="10" width="1" height="1" fill="#d8d4a8"/><rect x="13" y="10" width="1" height="1" fill="#404040"/><rect x="7" y="11" width="1" height="1" fill="#404040"/><rect x="8" y="11" width="1" height="1" fill="#fafae8"/><rect x="9" y="11" width="3" height="1" fill="#eceacc"/><rect x="12" y="11" width="1" height="1" fill="#d8d4a8"/><rect x="13" y="11" width="1" height="1" fill="#404040"/><rect x="7" y="12" width="7" height="1" fill="#404040"/></svg>
<div class="t" style="left:28px;top:356px;letter-spacing:-0.13px">Object Flow</div>
<svg width="15" height="14" style="left:10px;top:375px" shape-rendering="crispEdges"><rect x="0" y="0" width="1" height="1" fill="#4a78e8"/><rect x="0" y="1" width="1" height="1" fill="#303050"/><rect x="1" y="1" width="1" height="1" fill="#4a78e8"/><rect x="1" y="2" width="1" height="1" fill="#303050"/><rect x="2" y="2" width="1" height="1" fill="#4a78e8"/><rect x="2" y="3" width="1" height="1" fill="#303050"/><rect x="3" y="3" width="1" height="1" fill="#4a78e8"/><rect x="8" y="3" width="1" height="1" fill="#4a78e8"/><rect x="3" y="4" width="1" height="1" fill="#303050"/><rect x="4" y="4" width="1" height="1" fill="#4a78e8"/><rect x="8" y="4" width="1" height="1" fill="#4a78e8"/><rect x="4" y="5" width="1" height="1" fill="#303050"/><rect x="5" y="5" width="1" height="1" fill="#4a78e8"/><rect x="8" y="5" width="1" height="1" fill="#4a78e8"/><rect x="5" y="6" width="1" height="1" fill="#303050"/><rect x="6" y="6" width="1" height="1" fill="#4a78e8"/><rect x="8" y="6" width="1" height="1" fill="#4a78e8"/><rect x="6" y="7" width="1" height="1" fill="#303050"/><rect x="7" y="7" width="2" height="1" fill="#4a78e8"/><rect x="3" y="8" width="6" height="1" fill="#4a78e8"/><rect x="3" y="9" width="6" height="1" fill="#303050"/><rect x="9" y="9" width="5" height="1" fill="#404040"/><rect x="8" y="10" width="1" height="1" fill="#404040"/><rect x="9" y="10" width="2" height="1" fill="#fafae8"/><rect x="11" y="10" width="2" height="1" fill="#eceacc"/><rect x="13" y="10" width="1" height="1" fill="#d8d4a8"/><rect x="14" y="10" width="1" height="1" fill="#404040"/><rect x="8" y="11" width="1" height="1" fill="#404040"/><rect x="9" y="11" width="1" height="1" fill="#fafae8"/><rect x="10" y="11" width="3" height="1" fill="#eceacc"/><rect x="13" y="11" width="1" height="1" fill="#d8d4a8"/><rect x="14" y="11" width="1" height="1" fill="#404040"/><rect x="8" y="12" width="1" height="1" fill="#404040"/><rect x="9" y="12" width="3" height="1" fill="#eceacc"/><rect x="12" y="12" width="2" height="1" fill="#d8d4a8"/><rect x="14" y="12" width="1" height="1" fill="#404040"/><rect x="9" y="13" width="5" height="1" fill="#404040"/></svg>
<div class="t" style="left:28px;top:376px;letter-spacing:-0.168px">Control Flow</div>
<svg width="16" height="14" style="left:10px;top:396px"><defs><linearGradient id="gc" x1="0" y1="0" x2="1" y2="1"><stop offset="0" stop-color="#fbfbe8"/><stop offset="1" stop-color="#d8d6b0"/></linearGradient></defs><path d="M0.5 0.5H8.5L14.5 6.5L8.5 12.5H0.5Z" fill="url(#gc)" stroke="#404040"/></svg>
<div class="t" style="left:28px;top:396px;letter-spacing:-0.221px">Send Signal Action</div>
<svg width="16" height="14" style="left:10px;top:416px"><defs><linearGradient id="gd" x1="0" y1="0" x2="1" y2="1"><stop offset="0" stop-color="#fbfbe8"/><stop offset="1" stop-color="#d8d6b0"/></linearGradient></defs><path d="M0.5 0.5H14.5V12.5H0.5L6.5 6.5Z" fill="url(#gd)" stroke="#404040"/></svg>
<div class="t" style="left:28px;top:416px;letter-spacing:-0.028px">Accept Event Action</div>
<svg width="14" height="14" style="left:10px;top:436px"><path d="M0.5 0.5H12.5L0.5 12.5H12.5Z" fill="#eeeccc" stroke="#404040"/></svg>
<div class="t" style="left:28px;top:436px;letter-spacing:-0.238px">Time Event</div>
<svg width="8" height="8" style="left:13px;top:458px" shape-rendering="crispEdges"><rect x="2" y="0" width="4" height="1" fill="#505050"/><rect x="1" y="1" width="6" height="1" fill="#505050"/><rect x="0" y="2" width="8" height="1" fill="#505050"/><rect x="0" y="3" width="8" height="1" fill="#505050"/><rect x="0" y="4" width="8" height="1" fill="#505050"/><rect x="0" y="5" width="8" height="1" fill="#505050"/><rect x="1" y="6" width="6" height="1" fill="#505050"/><rect x="2" y="7" width="4" height="1" fill="#505050"/></svg>
<div class="t" style="left:28px;top:456px;letter-spacing:-0.041px">Initial Node</div>
<svg width="11" height="11" style="left:12px;top:477px" shape-rendering="crispEdges"><rect x="3" y="0" width="5" height="1" fill="#505050"/><rect x="1" y="1" width="2" height="1" fill="#505050"/><rect x="3" y="1" width="5" height="1" fill="#f0f0f0"/><rect x="8" y="1" width="2" height="1" fill="#505050"/><rect x="1" y="2" width="1" height="1" fill="#505050"/><rect x="2" y="2" width="2" height="1" fill="#f0f0f0"/><rect x="4" y="2" width="3" height="1" fill="#505050"/><rect x="7" y="2" width="2" height="1" fill="#f0f0f0"/><rect x="9" y="2" width="1" height="1" fill="#505050"/><rect x="0" y="3" width="1" height="1" fill="#505050"/><rect x="1" y="3" width="2" height="1" fill="#f0f0f0"/><rect x="3" y="3" width="5" height="1" fill="#505050"/><rect x="8" y="3" width="2" height="1" fill="#f0f0f0"/><rect x="10" y="3" width="1" height="1" fill="#505050"/><rect x="0" y="4" width="1" height="1" fill="#505050"/><rect x="1" y="4" width="1" height="1" fill="#f0f0f0"/><rect x="2" y="4" width="7" height="1" fill="#505050"/><rect x="9" y="4" width="1" height="1" fill="#f0f0f0"/><rect x="10" y="4" width="1" height="1" fill="#505050"/><rect x="0" y="5" width="1" height="1" fill="#505050"/><rect x="1" y="5" width="1" height="1" fill="#f0f0f0"/><rect x="2" y="5" width="7" height="1" fill="#505050"/><rect x="9" y="5" width="1" height="1" fill="#f0f0f0"/><rect x="10" y="5" width="1" height="1" fill="#505050"/><rect x="0" y="6" width="1" height="1" fill="#505050"/><rect x="1" y="6" width="1" height="1" fill="#f0f0f0"/><rect x="2" y="6" width="7" height="1" fill="#505050"/><rect x="9" y="6" width="1" height="1" fill="#f0f0f0"/><rect x="10" y="6" width="1" height="1" fill="#505050"/><rect x="0" y="7" width="1" height="1" fill="#505050"/><rect x="1" y="7" width="2" height="1" fill="#f0f0f0"/><rect x="3" y="7" width="5" height="1" fill="#505050"/><rect x="8" y="7" width="2" height="1" fill="#f0f0f0"/><rect x="10" y="7" width="1" height="1" fill="#505050"/><rect x="1" y="8" width="1" height="1" fill="#505050"/><rect x="2" y="8" width="2" height="1" fill="#f0f0f0"/><rect x="4" y="8" width="3" height="1" fill="#505050"/><rect x="7" y="8" width="2" height="1" fill="#f0f0f0"/><rect x="9" y="8" width="1" height="1" fill="#505050"/><rect x="1" y="9" width="2" height="1" fill="#505050"/><rect x="3" y="9" width="5" height="1" fill="#f0f0f0"/><rect x="8" y="9" width="2" height="1" fill="#505050"/><rect x="3" y="10" width="5" height="1" fill="#505050"/></svg>
<div class="t" style="left:28px;top:476px;letter-spacing:0.034px">Activity Final</div>
<svg width="15" height="16" style="left:9px;top:494px" shape-rendering="crispEdges"><rect x="7" y="0" width="1" height="1" fill="#4a78e8"/><rect x="7" y="1" width="1" height="1" fill="#4a78e8"/><rect x="5" y="2" width="1" height="1" fill="#4a78e8"/><rect x="7" y="2" width="1" height="1" fill="#4a78e8"/><rect x="9" y="2" width="1" height="1" fill="#4a78e8"/><rect x="6" y="3" width="3" height="1" fill="#4a78e8"/><rect x="7" y="4" width="1" height="1" fill="#4a78e8"/><rect x="6" y="5" width="3" height="1" fill="#404040"/><rect x="3" y="6" width="3" height="1" fill="#404040"/><rect x="6" y="6" width="1" height="1" fill="#d4d4d4"/><rect x="7" y="6" width="2" height="1" fill="#ffffff"/><rect x="9" y="6" width="3" height="1" fill="#404040"/><rect x="1" y="7" width="2" height="1" fill="#404040"/><rect x="3" y="7" width="4" height="1" fill="#d4d4d4"/><rect x="7" y="7" width="5" height="1" fill="#ffffff"/><rect x="12" y="7" width="2" height="1" fill="#404040"/><rect x="0" y="8" width="1" height="1" fill="#404040"/><rect x="1" y="8" width="6" height="1" fill="#d4d4d4"/><rect x="7" y="8" width="7" height="1" fill="#ffffff"/><rect x="14" y="8" width="1" height="1" fill="#404040"/><rect x="1" y="9" width="2" height="1" fill="#404040"/><rect x="3" y="9" width="4" height="1" fill="#d4d4d4"/><rect x="7" y="9" width="5" height="1" fill="#ffffff"/><rect x="12" y="9" width="2" height="1" fill="#404040"/><rect x="3" y="10" width="3" height="1" fill="#404040"/><rect x="6" y="10" width="1" height="1" fill="#d4d4d4"/><rect x="7" y="10" width="2" height="1" fill="#ffffff"/><rect x="9" y="10" width="3" height="1" fill="#404040"/><rect x="6" y="11" width="3" height="1" fill="#404040"/><rect x="4" y="12" width="1" height="1" fill="#4a78e8"/><rect x="10" y="12" width="1" height="1" fill="#4a78e8"/><rect x="0" y="13" width="1" height="1" fill="#4a78e8"/><rect x="3" y="13" width="1" height="1" fill="#4a78e8"/><rect x="11" y="13" width="1" height="1" fill="#4a78e8"/><rect x="14" y="13" width="1" height="1" fill="#4a78e8"/><rect x="0" y="14" width="1" height="1" fill="#4a78e8"/><rect x="2" y="14" width="1" height="1" fill="#4a78e8"/><rect x="12" y="14" width="1" height="1" fill="#4a78e8"/><rect x="14" y="14" width="1" height="1" fill="#4a78e8"/><rect x="0" y="15" width="4" height="1" fill="#4a78e8"/><rect x="11" y="15" width="4" height="1" fill="#4a78e8"/></svg>
<div class="t" style="left:28px;top:496px;letter-spacing:-0.378px">Decision</div>
<svg width="15" height="16" style="left:9px;top:514px" shape-rendering="crispEdges"><rect x="0" y="0" width="1" height="1" fill="#4a78e8"/><rect x="14" y="0" width="1" height="1" fill="#4a78e8"/><rect x="1" y="1" width="1" height="1" fill="#4a78e8"/><rect x="4" y="1" width="1" height="1" fill="#4a78e8"/><rect x="10" y="1" width="1" height="1" fill="#4a78e8"/><rect x="13" y="1" width="1" height="1" fill="#4a78e8"/><rect x="2" y="2" width="1" height="1" fill="#4a78e8"/><rect x="4" y="2" width="1" height="1" fill="#4a78e8"/><rect x="10" y="2" width="1" height="1" fill="#4a78e8"/><rect x="12" y="2" width="1" height="1" fill="#4a78e8"/><rect x="3" y="3" width="2" height="1" fill="#4a78e8"/><rect x="10" y="3" width="2" height="1" fill="#4a78e8"/><rect x="1" y="4" width="4" height="1" fill="#4a78e8"/><rect x="6" y="4" width="3" height="1" fill="#404040"/><rect x="10" y="4" width="4" height="1" fill="#4a78e8"/><rect x="3" y="5" width="3" height="1" fill="#404040"/><rect x="6" y="5" width="1" height="1" fill="#d4d4d4"/><rect x="7" y="5" width="2" height="1" fill="#ffffff"/><rect x="9" y="5" width="3" height="1" fill="#404040"/><rect x="1" y="6" width="2" height="1" fill="#404040"/><rect x="3" y="6" width="4" height="1" fill="#d4d4d4"/><rect x="7" y="6" width="5" height="1" fill="#ffffff"/><rect x="12" y="6" width="2" height="1" fill="#404040"/><rect x="0" y="7" width="1" height="1" fill="#404040"/><rect x="1" y="7" width="6" height="1" fill="#d4d4d4"/><rect x="7" y="7" width="7" height="1" fill="#ffffff"/><rect x="14" y="7" width="1" height="1" fill="#404040"/><rect x="1" y="8" width="2" height="1" fill="#404040"/><rect x="3" y="8" width="4" height="1" fill="#d4d4d4"/><rect x="7" y="8" width="5" height="1" fill="#ffffff"/><rect x="12" y="8" width="2" height="1" fill="#404040"/><rect x="3" y="9" width="3" height="1" fill="#404040"/><rect x="6" y="9" width="1" height="1" fill="#d4d4d4"/><rect x="7" y="9" width="2" height="1" fill="#ffffff"/><rect x="9" y="9" width="3" height="1" fill="#404040"/><rect x="6" y="10" width="3" height="1" fill="#404040"/><rect x="7" y="11" width="1" height="1" fill="#4a78e8"/><rect x="7" y="12" width="1" height="1" fill="#4a78e8"/><rect x="5" y="13" width="1" height="1" fill="#4a78e8"/><rect x="7" y="13" width="1" height="1" fill="#4a78e8"/><rect x="9" y="13" width="1" height="1" fill="#4a78e8"/><rect x="6" y="14" width="3" height="1" fill="#4a78e8"/><rect x="7" y="15" width="1" height="1" fill="#4a78e8"/></svg>
<div class="t" style="left:28px;top:516px;letter-spacing:-0.1px">Merge</div>
<svg width="11" height="12" style="left:12px;top:537px" shape-rendering="crispEdges"><rect x="1" y="0" width="9" height="1" fill="#404040"/><rect x="9" y="1" width="1" height="1" fill="#404040"/><rect x="8" y="2" width="1" height="1" fill="#404040"/><rect x="7" y="3" width="1" height="1" fill="#404040"/><rect x="6" y="4" width="1" height="1" fill="#404040"/><rect x="5" y="5" width="1" height="1" fill="#404040"/><rect x="4" y="6" width="1" height="1" fill="#404040"/><rect x="3" y="7" width="1" height="1" fill="#404040"/><rect x="8" y="7" width="1" height="1" fill="#404040"/><rect x="2" y="8" width="1" height="1" fill="#404040"/><rect x="9" y="8" width="1" height="1" fill="#404040"/><rect x="0" y="9" width="11" height="1" fill="#404040"/><rect x="9" y="10" width="1" height="1" fill="#404040"/><rect x="8" y="11" width="1" height="1" fill="#404040"/></svg>
<div class="t" style="left:28px;top:536px;letter-spacing:-0.188px">Exception Handler</div>
<svg width="16" height="15" style="left:9px;top:555px" shape-rendering="crispEdges"><rect x="3" y="0" width="10" height="1" fill="#404040"/><rect x="2" y="1" width="2" height="1" fill="#404040"/><rect x="4" y="1" width="1" height="1" fill="#ffffff"/><rect x="5" y="1" width="1" height="1" fill="#404040"/><rect x="6" y="1" width="1" height="1" fill="#ffffff"/><rect x="7" y="1" width="1" height="1" fill="#404040"/><rect x="8" y="1" width="1" height="1" fill="#ffffff"/><rect x="9" y="1" width="1" height="1" fill="#404040"/><rect x="10" y="1" width="1" height="1" fill="#ffffff"/><rect x="11" y="1" width="3" height="1" fill="#404040"/><rect x="1" y="2" width="3" height="1" fill="#404040"/><rect x="4" y="2" width="1" height="1" fill="#ffffff"/><rect x="5" y="2" width="1" height="1" fill="#404040"/><rect x="6" y="2" width="1" height="1" fill="#ffffff"/><rect x="7" y="2" width="1" height="1" fill="#404040"/><rect x="8" y="2" width="1" height="1" fill="#ffffff"/><rect x="9" y="2" width="1" height="1" fill="#404040"/><rect x="10" y="2" width="1" height="1" fill="#ffffff"/><rect x="11" y="2" width="4" height="1" fill="#404040"/><rect x="0" y="3" width="1" height="1" fill="#404040"/><rect x="3" y="3" width="10" height="1" fill="#404040"/><rect x="15" y="3" width="1" height="1" fill="#404040"/><rect x="1" y="4" width="11" height="1" fill="#fafae8"/><rect x="12" y="4" width="3" height="1" fill="#eceacc"/><rect x="0" y="5" width="1" height="1" fill="#404040"/><rect x="1" y="5" width="10" height="1" fill="#fafae8"/><rect x="11" y="5" width="4" height="1" fill="#eceacc"/><rect x="15" y="5" width="1" height="1" fill="#404040"/><rect x="0" y="6" width="1" height="1" fill="#404040"/><rect x="1" y="6" width="9" height="1" fill="#fafae8"/><rect x="10" y="6" width="5" height="1" fill="#eceacc"/><rect x="15" y="6" width="1" height="1" fill="#404040"/><rect x="1" y="7" width="8" height="1" fill="#fafae8"/><rect x="9" y="7" width="6" height="1" fill="#eceacc"/><rect x="0" y="8" width="1" height="1" fill="#404040"/><rect x="1" y="8" width="7" height="1" fill="#fafae8"/><rect x="8" y="8" width="7" height="1" fill="#eceacc"/><rect x="15" y="8" width="1" height="1" fill="#404040"/><rect x="0" y="9" width="1" height="1" fill="#404040"/><rect x="1" y="9" width="6" height="1" fill="#fafae8"/><rect x="7" y="9" width="8" height="1" fill="#eceacc"/><rect x="15" y="9" width="1" height="1" fill="#404040"/><rect x="1" y="10" width="5" height="1" fill="#fafae8"/><rect x="6" y="10" width="9" height="1" fill="#eceacc"/><rect x="0" y="11" width="1" height="1" fill="#404040"/><rect x="3" y="11" width="10" height="1" fill="#404040"/><rect x="15" y="11" width="1" height="1" fill="#404040"/><rect x="1" y="12" width="1" height="1" fill="#404040"/><rect x="3" y="12" width="1" height="1" fill="#404040"/><rect x="4" y="12" width="1" height="1" fill="#ffffff"/><rect x="5" y="12" width="1" height="1" fill="#404040"/><rect x="6" y="12" width="1" height="1" fill="#ffffff"/><rect x="7" y="12" width="1" height="1" fill="#404040"/><rect x="8" y="12" width="1" height="1" fill="#ffffff"/><rect x="9" y="12" width="1" height="1" fill="#404040"/><rect x="10" y="12" width="1" height="1" fill="#ffffff"/><rect x="11" y="12" width="2" height="1" fill="#404040"/><rect x="14" y="12" width="1" height="1" fill="#404040"/><rect x="2" y="13" width="2" height="1" fill="#404040"/><rect x="4" y="13" width="1" height="1" fill="#ffffff"/><rect x="5" y="13" width="1" height="1" fill="#404040"/><rect x="6" y="13" width="1" height="1" fill="#ffffff"/><rect x="7" y="13" width="1" height="1" fill="#404040"/><rect x="8" y="13" width="1" height="1" fill="#ffffff"/><rect x="9" y="13" width="1" height="1" fill="#404040"/><rect x="10" y="13" width="1" height="1" fill="#ffffff"/><rect x="11" y="13" width="3" height="1" fill="#404040"/><rect x="3" y="14" width="10" height="1" fill="#404040"/></svg>
<div class="t" style="left:28px;top:556px;letter-spacing:-0.23px">Expansion Region</div>
<svg width="13" height="16" style="left:11px;top:574px" shape-rendering="crispEdges"><rect x="10" y="0" width="2" height="1" fill="#404040"/><rect x="8" y="1" width="2" height="1" fill="#404040"/><rect x="8" y="2" width="1" height="1" fill="#404040"/><rect x="7" y="3" width="1" height="1" fill="#404040"/><rect x="0" y="4" width="9" height="1" fill="#404040"/><rect x="0" y="5" width="1" height="1" fill="#404040"/><rect x="1" y="5" width="6" height="1" fill="#fafae8"/><rect x="7" y="5" width="1" height="1" fill="#eceacc"/><rect x="8" y="5" width="1" height="1" fill="#404040"/><rect x="0" y="6" width="1" height="1" fill="#404040"/><rect x="1" y="6" width="4" height="1" fill="#fafae8"/><rect x="5" y="6" width="1" height="1" fill="#404040"/><rect x="6" y="6" width="1" height="1" fill="#fafae8"/><rect x="7" y="6" width="1" height="1" fill="#eceacc"/><rect x="8" y="6" width="1" height="1" fill="#404040"/><rect x="0" y="7" width="1" height="1" fill="#404040"/><rect x="1" y="7" width="1" height="1" fill="#fafae8"/><rect x="2" y="7" width="5" height="1" fill="#404040"/><rect x="7" y="7" width="1" height="1" fill="#eceacc"/><rect x="8" y="7" width="1" height="1" fill="#404040"/><rect x="0" y="8" width="1" height="1" fill="#404040"/><rect x="1" y="8" width="4" height="1" fill="#fafae8"/><rect x="5" y="8" width="1" height="1" fill="#404040"/><rect x="6" y="8" width="2" height="1" fill="#eceacc"/><rect x="8" y="8" width="1" height="1" fill="#404040"/><rect x="0" y="9" width="1" height="1" fill="#404040"/><rect x="1" y="9" width="3" height="1" fill="#fafae8"/><rect x="4" y="9" width="4" height="1" fill="#eceacc"/><rect x="8" y="9" width="1" height="1" fill="#404040"/><rect x="0" y="10" width="1" height="1" fill="#404040"/><rect x="1" y="10" width="2" height="1" fill="#fafae8"/><rect x="3" y="10" width="4" height="1" fill="#eceacc"/><rect x="7" y="10" width="1" height="1" fill="#d8d4a8"/><rect x="8" y="10" width="1" height="1" fill="#404040"/><rect x="0" y="11" width="9" height="1" fill="#404040"/><rect x="7" y="12" width="1" height="1" fill="#404040"/><rect x="8" y="13" width="1" height="1" fill="#404040"/><rect x="8" y="14" width="2" height="1" fill="#404040"/><rect x="10" y="15" width="2" height="1" fill="#404040"/></svg>
<div class="t" style="left:28px;top:576px;letter-spacing:0.049px">Input Pin</div>
<svg width="9" height="6" style="left:162px;top:580px" shape-rendering="crispEdges"><rect x="1" y="0" width="7" height="1" fill="#ffffff"/><rect x="0" y="1" width="1" height="1" fill="#ffffff"/><rect x="1" y="1" width="7" height="1" fill="#000"/><rect x="8" y="1" width="1" height="1" fill="#ffffff"/><rect x="1" y="2" width="1" height="1" fill="#ffffff"/><rect x="2" y="2" width="5" height="1" fill="#000"/><rect x="7" y="2" width="1" height="1" fill="#ffffff"/><rect x="2" y="3" width="1" height="1" fill="#ffffff"/><rect x="3" y="3" width="3" height="1" fill="#000"/><rect x="6" y="3" width="1" height="1" fill="#ffffff"/><rect x="3" y="4" width="1" height="1" fill="#ffffff"/><rect x="4" y="4" width="1" height="1" fill="#000"/><rect x="5" y="4" width="1" height="1" fill="#ffffff"/><rect x="4" y="5" width="1" height="1" fill="#ffffff"/></svg>
<svg width="11" height="6" style="left:84px;top:598px" shape-rendering="crispEdges"><rect x="5" y="0" width="1" height="1" fill="#404040"/><rect x="4" y="1" width="3" height="1" fill="#404040"/><rect x="3" y="2" width="5" height="1" fill="#404040"/><rect x="2" y="3" width="7" height="1" fill="#404040"/><rect x="1" y="4" width="9" height="1" fill="#404040"/><rect x="0" y="5" width="11" height="1" fill="#404040"/></svg>
<!-- diagram pane -->
<div class="a" style="left:175px;top:75px;width:745px;height:650px;border:1px solid #7a8290;background:#fff"></div>
<!-- DIAGRAM -->
<svg width="727" height="632" style="left:176px;top:76px" shape-rendering="crispEdges">
<defs>
<pattern id="g50" x="0" y="0" width="50" height="50" patternUnits="userSpaceOnUse">
<rect x="0" y="0" width="1" height="1" fill="#7a7a7a"/><rect x="10" y="0" width="1" height="1" fill="#7a7a7a"/><rect x="20" y="0" width="1" height="1" fill="#7a7a7a"/><rect x="30" y="0" width="1" height="1" fill="#7a7a7a"/><rect x="40" y="0" width="1" height="1" fill="#7a7a7a"/>
<rect x="0" y="10" width="1" height="1" fill="#7a7a7a"/><rect x="0" y="20" width="1" height="1" fill="#7a7a7a"/><rect x="0" y="30" width="1" height="1" fill="#7a7a7a"/><rect x="0" y="40" width="1" height="1" fill="#7a7a7a"/>
</pattern>
<pattern id="g100" x="-1" y="-1" width="100" height="100" patternUnits="userSpaceOnUse">
<rect x="0" y="1" width="3" height="1" fill="#7a7a7a"/><rect x="1" y="0" width="1" height="3" fill="#7a7a7a"/>
</pattern>
<clipPath id="fc"><rect x="6" y="6" width="626" height="616" rx="8"/></clipPath>
</defs>
<g clip-path="url(#fc)">
<rect x="0" y="0" width="727" height="632" fill="url(#g50)"/>
<rect x="0" y="0" width="727" height="632" fill="url(#g100)"/>
</g>
<!-- frame -->
<rect x="5.5" y="5.5" width="627" height="617" rx="9" fill="none" stroke="#404040" shape-rendering="auto"/>
<path d="M6 27.5H393.5L402.5 20.5V5" fill="none" stroke="#404040" shape-rendering="auto"/>
</svg>
<div class="t" style="left:187px;top:86px;font-size:12px;font-weight:bold;letter-spacing:-0.3px">activity</div>
<div class="t" style="left:230px;top:86px;font-size:12px;font-weight:bold;letter-spacing:-0.1px">Activity Diagram</div>
<div class="t" style="left:328px;top:86px;font-size:12px;letter-spacing:-0.1px">Get Exchange Rate [</div>
<svg width="16" height="16" style="left:442px;top:84px" shape-rendering="crispEdges"><rect x="0" y="0" width="13" height="1" fill="#787878"/><rect x="0" y="1" width="1" height="1" fill="#787878"/><rect x="1" y="1" width="10" height="1" fill="#e0e0e0"/><rect x="11" y="1" width="1" height="1" fill="#787878"/><rect x="12" y="1" width="1" height="1" fill="#ffffff"/><rect x="13" y="1" width="1" height="1" fill="#787878"/><rect x="0" y="2" width="1" height="1" fill="#787878"/><rect x="1" y="2" width="7" height="1" fill="#e0e0e0"/><rect x="8" y="2" width="3" height="1" fill="#333333"/><rect x="11" y="2" width="1" height="1" fill="#787878"/><rect x="12" y="2" width="2" height="1" fill="#ffffff"/><rect x="14" y="2" width="1" height="1" fill="#787878"/><rect x="0" y="3" width="1" height="1" fill="#787878"/><rect x="1" y="3" width="1" height="1" fill="#e0e0e0"/><rect x="2" y="3" width="3" height="1" fill="#333333"/><rect x="5" y="3" width="2" height="1" fill="#e0e0e0"/><rect x="7" y="3" width="1" height="1" fill="#333333"/><rect x="8" y="3" width="3" height="1" fill="#d4e0f4"/><rect x="11" y="3" width="1" height="1" fill="#787878"/><rect x="12" y="3" width="3" height="1" fill="#ffffff"/><rect x="15" y="3" width="1" height="1" fill="#787878"/><rect x="0" y="4" width="1" height="1" fill="#787878"/><rect x="1" y="4" width="1" height="1" fill="#e0e0e0"/><rect x="2" y="4" width="6" height="1" fill="#333333"/><rect x="8" y="4" width="3" height="1" fill="#d4e0f4"/><rect x="11" y="4" width="5" height="1" fill="#787878"/><rect x="0" y="5" width="1" height="1" fill="#787878"/><rect x="1" y="5" width="1" height="1" fill="#e0e0e0"/><rect x="2" y="5" width="3" height="1" fill="#333333"/><rect x="5" y="5" width="2" height="1" fill="#e0e0e0"/><rect x="7" y="5" width="1" height="1" fill="#333333"/><rect x="8" y="5" width="5" height="1" fill="#d4e0f4"/><rect x="13" y="5" width="1" height="1" fill="#333333"/><rect x="14" y="5" width="1" height="1" fill="#e0e0e0"/><rect x="15" y="5" width="1" height="1" fill="#787878"/><rect x="0" y="6" width="1" height="1" fill="#787878"/><rect x="1" y="6" width="7" height="1" fill="#e0e0e0"/><rect x="8" y="6" width="5" height="1" fill="#333333"/><rect x="13" y="6" width="2" height="1" fill="#e0e0e0"/><rect x="15" y="6" width="1" height="1" fill="#787878"/><rect x="0" y="7" width="1" height="1" fill="#787878"/><rect x="1" y="7" width="9" height="1" fill="#e0e0e0"/><rect x="10" y="7" width="1" height="1" fill="#333333"/><rect x="11" y="7" width="4" height="1" fill="#e0e0e0"/><rect x="15" y="7" width="1" height="1" fill="#787878"/><rect x="0" y="8" width="1" height="1" fill="#787878"/><rect x="1" y="8" width="9" height="1" fill="#e0e0e0"/><rect x="10" y="8" width="1" height="1" fill="#333333"/><rect x="11" y="8" width="4" height="1" fill="#e0e0e0"/><rect x="15" y="8" width="1" height="1" fill="#787878"/><rect x="0" y="9" width="1" height="1" fill="#787878"/><rect x="1" y="9" width="9" height="1" fill="#e0e0e0"/><rect x="10" y="9" width="1" height="1" fill="#333333"/><rect x="11" y="9" width="4" height="1" fill="#e0e0e0"/><rect x="15" y="9" width="1" height="1" fill="#787878"/><rect x="0" y="10" width="1" height="1" fill="#787878"/><rect x="1" y="10" width="8" height="1" fill="#e0e0e0"/><rect x="9" y="10" width="3" height="1" fill="#333333"/><rect x="12" y="10" width="3" height="1" fill="#e0e0e0"/><rect x="15" y="10" width="1" height="1" fill="#787878"/><rect x="0" y="11" width="1" height="1" fill="#787878"/><rect x="1" y="11" width="9" height="1" fill="#e0e0e0"/><rect x="10" y="11" width="1" height="1" fill="#333333"/><rect x="11" y="11" width="4" height="1" fill="#e0e0e0"/><rect x="15" y="11" width="1" height="1" fill="#787878"/><rect x="0" y="12" width="1" height="1" fill="#787878"/><rect x="1" y="12" width="2" height="1" fill="#e0e0e0"/><rect x="3" y="12" width="10" height="1" fill="#333333"/><rect x="13" y="12" width="2" height="1" fill="#e0e0e0"/><rect x="15" y="12" width="1" height="1" fill="#787878"/><rect x="0" y="13" width="1" height="1" fill="#787878"/><rect x="1" y="13" width="2" height="1" fill="#e0e0e0"/><rect x="3" y="13" width="10" height="1" fill="#333333"/><rect x="13" y="13" width="2" height="1" fill="#e0e0e0"/><rect x="15" y="13" width="1" height="1" fill="#787878"/><rect x="0" y="14" width="1" height="1" fill="#787878"/><rect x="1" y="14" width="14" height="1" fill="#e0e0e0"/><rect x="15" y="14" width="1" height="1" fill="#787878"/><rect x="0" y="15" width="16" height="1" fill="#787878"/></svg>
<div class="t" style="left:462px;top:86px;font-size:12px;letter-spacing:-0.1px">Get Exchange Rate ]</div>
<!-- start -->
<div class="t" style="left:455px;top:150px;font-size:12px;letter-spacing:-0.15px">Start</div>
<svg width="26" height="26" style="left:456px;top:165px"><circle cx="12.4" cy="12.4" r="11.5" fill="#404040"/></svg>
<!-- end -->
<svg width="28" height="28" style="left:456px;top:524px"><circle cx="14.2" cy="14.2" r="11.6" fill="#c4c4c4"/><circle cx="12.4" cy="12.4" r="11" fill="#fff" stroke="#404040" stroke-width="1.2"/><circle cx="12.4" cy="12.4" r="6.5" fill="#404040"/></svg>
<div class="t" style="left:457px;top:552px;font-size:12px;letter-spacing:0px">End</div>
<!-- object -->
<div class="a" style="left:719px;top:336px;width:178px;height:25px;background:#ccccff;border:1px solid #404040"></div>
<div class="t" style="left:725px;top:341px;font-size:12px;font-weight:bold;letter-spacing:-0.26px">exchangeRateCHFUSD : Float</div>
<!-- scrollbars -->
<div class="a" style="left:903px;top:76px;width:16px;height:632px;background:#f0f0f0"></div>
<div class="a" style="left:903px;top:93px;width:15px;height:335px;background:#cdcdcd"></div>
<svg width="7" height="6" style="left:907px;top:82px" shape-rendering="crispEdges"><rect x="3" y="0" width="1" height="1" fill="#505050"/><rect x="2" y="1" width="3" height="1" fill="#505050"/><rect x="1" y="2" width="5" height="1" fill="#505050"/><rect x="0" y="3" width="3" height="1" fill="#505050"/><rect x="4" y="3" width="3" height="1" fill="#505050"/><rect x="0" y="4" width="2" height="1" fill="#505050"/><rect x="5" y="4" width="2" height="1" fill="#505050"/><rect x="0" y="5" width="1" height="1" fill="#505050"/><rect x="6" y="5" width="1" height="1" fill="#505050"/></svg>
<svg width="7" height="6" style="left:907px;top:696px" shape-rendering="crispEdges"><rect x="0" y="0" width="1" height="1" fill="#505050"/><rect x="6" y="0" width="1" height="1" fill="#505050"/><rect x="0" y="1" width="2" height="1" fill="#505050"/><rect x="5" y="1" width="2" height="1" fill="#505050"/><rect x="0" y="2" width="3" height="1" fill="#505050"/><rect x="4" y="2" width="3" height="1" fill="#505050"/><rect x="1" y="3" width="5" height="1" fill="#505050"/><rect x="2" y="4" width="3" height="1" fill="#505050"/><rect x="3" y="5" width="1" height="1" fill="#505050"/></svg>
<div class="a" style="left:176px;top:708px;width:727px;height:15px;background:#f0f0f0"></div>
<div class="a" style="left:193px;top:708px;width:412px;height:15px;background:#cdcdcd"></div>
<svg width="6" height="7" style="left:181px;top:712px" shape-rendering="crispEdges"><rect x="3" y="0" width="3" height="1" fill="#505050"/><rect x="2" y="1" width="3" height="1" fill="#505050"/><rect x="1" y="2" width="3" height="1" fill="#505050"/><rect x="0" y="3" width="3" height="1" fill="#505050"/><rect x="1" y="4" width="3" height="1" fill="#505050"/><rect x="2" y="5" width="3" height="1" fill="#505050"/><rect x="3" y="6" width="3" height="1" fill="#505050"/></svg>
<svg width="6" height="7" style="left:891px;top:712px" shape-rendering="crispEdges"><rect x="0" y="0" width="3" height="1" fill="#505050"/><rect x="1" y="1" width="3" height="1" fill="#505050"/><rect x="2" y="2" width="3" height="1" fill="#505050"/><rect x="3" y="3" width="3" height="1" fill="#505050"/><rect x="2" y="4" width="3" height="1" fill="#505050"/><rect x="1" y="5" width="3" height="1" fill="#505050"/><rect x="0" y="6" width="3" height="1" fill="#505050"/></svg>
<div class="a" style="left:903px;top:708px;width:16px;height:16px;background:#fff"></div>

</body></html>
